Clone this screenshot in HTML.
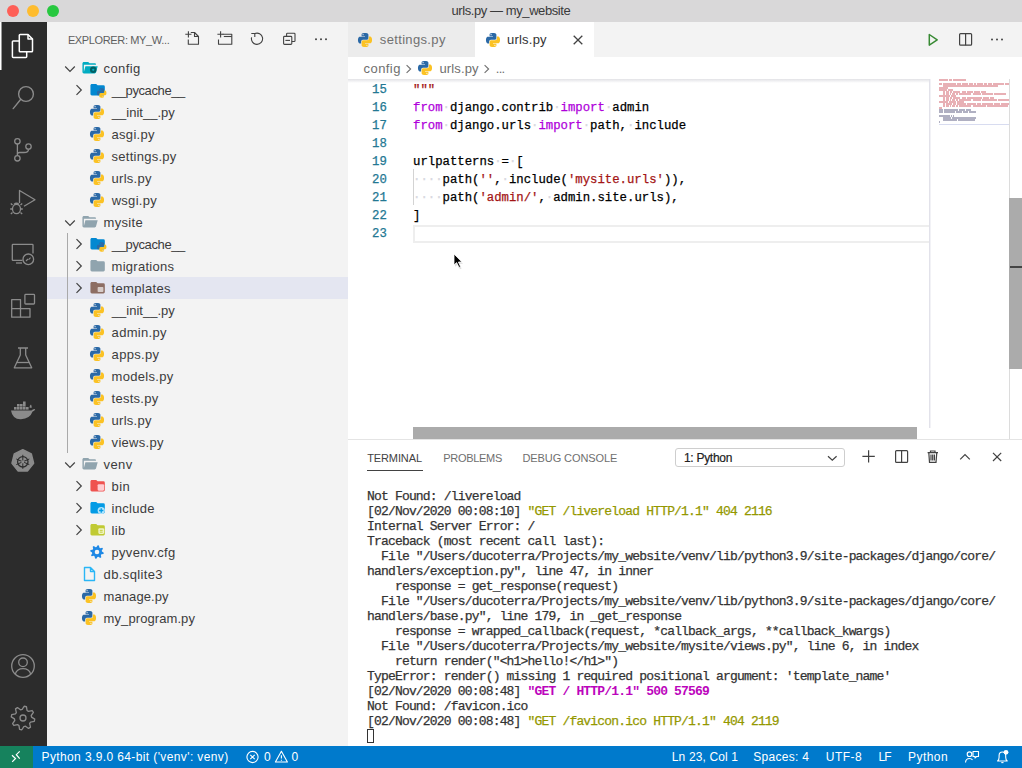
<!DOCTYPE html>
<html><head><meta charset="utf-8"><title>VS Code</title>
<style>
html,body{margin:0;padding:0;width:1022px;height:768px;overflow:hidden;background:#ffffff;}
.r{position:absolute;display:block;}
.t{position:absolute;white-space:pre;}
svg.r{overflow:visible;}
</style></head><body>
<div class="r" style="left:0px;top:0px;width:1022px;height:22px;background:#d9d8d9;"></div>
<div class="r" style="left:0px;top:22px;width:47px;height:724px;background:#2c2c2c;"></div>
<div class="r" style="left:47px;top:22px;width:301px;height:724px;background:#f3f3f3;"></div>
<div class="r" style="left:348px;top:22px;width:674px;height:35px;background:#f3f3f3;"></div>
<div class="r" style="left:348px;top:57px;width:674px;height:689px;background:#ffffff;"></div>
<div class="r" style="left:0px;top:746px;width:1022px;height:22px;background:#007acc;"></div>
<div class="r" style="left:0px;top:746px;width:33px;height:22px;background:#16825d;"></div>
<div class="r" style="left:7px;top:5px;width:12px;height:12px;border-radius:50%;background:#fe5f57;"></div>
<div class="r" style="left:27px;top:5px;width:12px;height:12px;border-radius:50%;background:#febc2e;"></div>
<div class="r" style="left:47px;top:5px;width:12px;height:12px;border-radius:50%;background:#28c840;"></div>
<div class="t" style="left:451.50px;top:2.10px;font-size:13px;line-height:17px;color:#3a3a3a;font-family:'Liberation Sans', sans-serif;letter-spacing:-0.418px;">urls.py — my_website</div>
<div class="r" style="left:0px;top:22px;width:1px;height:48px;background:#ffffff;"></div>
<div class="r" style="left:1px;top:22px;width:1px;height:48px;background:#9a9a9a;"></div>
<svg class="r" style="left:0px;top:22px;" width="47" height="48" viewBox="0 22 47 48"><g fill="none" stroke="#ffffff" stroke-width="1.5" stroke-linejoin="round"><path d="M19.3 41 H13.2 Q12.4 41 12.4 41.8 V56.6 Q12.4 57.4 13.2 57.4 H25.9 Q26.7 57.4 26.7 56.6 V51.7"/><path d="M20.1 34.4 H28 L32.5 39 V50.9 Q32.5 51.7 31.7 51.7 H20.1 Q19.3 51.7 19.3 50.9 V35.2 Q19.3 34.4 20.1 34.4 Z"/><path d="M28 34.4 V39 H32.5"/></g></svg>
<svg class="r" style="left:0px;top:70px;" width="47" height="52" viewBox="0 70 47 52"><g fill="none" stroke="#8b8b8b" stroke-width="1.4" stroke-linecap="round"><circle cx="26" cy="94" r="7.4"/><path d="M20.8 99.3 L13.2 108.6"/></g></svg>
<svg class="r" style="left:0px;top:122px;" width="47" height="52" viewBox="0 122 47 52"><g fill="none" stroke="#8b8b8b" stroke-width="1.3"><circle cx="17.4" cy="141.3" r="2.7"/><circle cx="28.5" cy="146.5" r="2.7"/><circle cx="17.4" cy="158.3" r="2.7"/><path d="M17.4 144 V155.6"/><path d="M28.5 149.2 Q28.5 152.5 24 152.5 H19.5 Q17.4 152.5 17.4 154.5"/></g></svg>
<svg class="r" style="left:0px;top:174px;" width="47" height="52" viewBox="0 174 47 52"><g fill="none" stroke="#8b8b8b" stroke-width="1.3" stroke-linejoin="round"><path d="M19.5 203 V190.5 L35 199.7 L24 206.2"/><ellipse cx="16.5" cy="209" rx="4" ry="4.6"/><path d="M12.5 205 L10.8 203.5 M20.5 205 L22.2 203.5 M12 209 H10.2 M21 209 H22.8 M12.5 212.5 L10.8 214 M20.5 212.5 L22.2 214 M14 204.5 Q16.5 202 19 204.5"/></g></svg>
<svg class="r" style="left:0px;top:226px;" width="47" height="52" viewBox="0 226 47 52"><g fill="none" stroke="#8b8b8b" stroke-width="1.3" stroke-linejoin="round"><path d="M22.5 260.4 H13 Q12.3 260.4 12.3 259.7 V245 Q12.3 244.3 13 244.3 H32.3 Q33 244.3 33 245 V253.5"/><path d="M16 263 H22"/><circle cx="28.3" cy="259.3" r="5.3"/><path d="M26 261 L28 259 M28.6 259.6 L30.6 257.6" stroke-width="1.1"/></g></svg>
<svg class="r" style="left:0px;top:278px;" width="47" height="52" viewBox="0 278 47 52"><g fill="none" stroke="#8b8b8b" stroke-width="1.3" stroke-linejoin="round"><path d="M11.7 299.6 H20.5 V308.6 H30 V317.2 H11.7 Z"/><path d="M11.7 308.6 H20.5 V317.2"/><rect x="24.9" y="294.4" width="9.6" height="9.6" rx="0.8"/></g></svg>
<svg class="r" style="left:0px;top:330px;" width="47" height="52" viewBox="0 330 47 52"><g fill="none" stroke="#8b8b8b" stroke-width="1.3" stroke-linejoin="round"><path d="M18 348 H28 M20.3 348 V355 L14.3 367.8 H31.7 L25.7 355 V348"/><path d="M16.5 362.5 H29.5"/></g></svg>
<svg class="r" style="left:0px;top:382px;" width="47" height="52" viewBox="0 382 47 52"><g fill="#8b8b8b"><path d="M11 410.5 H31.5 Q33 408.5 35.2 409 Q34.6 411.2 32.6 411.5 Q30 418.8 21 419.2 Q12.5 419.5 11 410.5 Z"/><rect x="14" y="407" width="2.6" height="2.6"/><rect x="17" y="407" width="2.6" height="2.6"/><rect x="20" y="407" width="2.6" height="2.6"/><rect x="23" y="407" width="2.6" height="2.6"/><rect x="26" y="407" width="2.6" height="2.6"/><rect x="17" y="404" width="2.6" height="2.6"/><rect x="20" y="404" width="2.6" height="2.6"/><rect x="23" y="404" width="2.6" height="2.6"/><rect x="23" y="401.5" width="2.6" height="2.6"/><path d="M29.5 407.5 Q29.8 405 31 404.5 Q32 406.3 31.5 408 Z"/></g></svg>
<svg class="r" style="left:0px;top:434px;" width="47" height="52" viewBox="0 434 47 52"><g><path fill="#8b8b8b" d="M22.8 449.8 L31.3 453.9 L33.6 463.2 L27.6 470.9 L18 470.9 L12 463.2 L14.3 453.9 Z" stroke="#8b8b8b" stroke-width="1.5" stroke-linejoin="round"/><circle cx="22.8" cy="461.8" r="5.2" fill="none" stroke="#2c2c2c" stroke-width="1.3"/><path d="M22.8 454.8 V468.8 M16.3 459 L29.3 464.6 M29.3 459 L16.3 464.6" stroke="#2c2c2c" stroke-width="1"/><circle cx="22.8" cy="461.8" r="1.6" fill="#8b8b8b"/></g></svg>
<svg class="r" style="left:0px;top:640px;" width="47" height="52" viewBox="0 640 47 52"><g fill="none" stroke="#8b8b8b" stroke-width="1.3"><circle cx="23" cy="666" r="11.3"/><circle cx="23" cy="662.3" r="4.3"/><path d="M15.2 674.2 Q17 668.7 23 668.7 Q29 668.7 30.8 674.2"/></g></svg>
<svg class="r" style="left:0px;top:692px;" width="47" height="52" viewBox="0 692 47 52"><g fill="none" stroke="#8b8b8b" stroke-width="1.3" stroke-linejoin="round"><path d="M24.16 706.26 L26.43 706.71 L27.05 710.42 L28.46 711.35 L32.12 710.51 L33.41 712.44 L31.23 715.50 L31.56 717.16 L34.74 719.16 L34.29 721.43 L30.58 722.05 L29.65 723.46 L30.49 727.12 L28.56 728.41 L25.50 726.23 L23.84 726.56 L21.84 729.74 L19.57 729.29 L18.95 725.58 L17.54 724.65 L13.88 725.49 L12.59 723.56 L14.77 720.50 L14.44 718.84 L11.26 716.84 L11.71 714.57 L15.42 713.95 L16.35 712.54 L15.51 708.88 L17.44 707.59 L20.50 709.77 L22.16 709.44 Z"/><circle cx="23" cy="718" r="3"/></g></svg>
<div class="t" style="left:67.90px;top:33.19px;font-size:11px;line-height:14px;color:#5f5f5f;font-family:'Liberation Sans', sans-serif;letter-spacing:-0.361px;">EXPLORER: MY_W...</div>
<svg class="r" style="left:180px;top:22px;" width="168" height="35" viewBox="180 22 168 35"><g fill="none" stroke="#424242" stroke-width="1.1" stroke-linejoin="round"><path d="M185.3 34.3 H191.5 M188.4 31.2 V37.4"/><path d="M190.8 32.5 H194.5 L198.5 36.5 V44.2 H188.3 V39.6"/><path d="M194.5 32.5 V36.5 H198.5"/><path d="M217.4 34.3 H223.5 M220.6 31.2 V37.4"/><path d="M222.6 34.3 H231.8 V44.2 H218.5 V39.6"/><path d="M223.8 36.5 H231.8"/><path d="M254.8 33.6 A5.6 5.6 0 1 1 251.6 37.3"/><path d="M251.3 33.5 H254.8 V37"/><rect x="283.6" y="36.4" width="8.2" height="8" rx="0.9"/><path d="M286.6 36.4 V34.1 Q286.6 33.3 287.4 33.3 H294.2 Q295 33.3 295 34.1 V40.7 Q295 41.5 294.2 41.5 H291.8"/><path d="M285.4 40.4 H290"/></g><g fill="#424242"><circle cx="316" cy="39.3" r="1"/><circle cx="321" cy="39.3" r="1"/><circle cx="326" cy="39.3" r="1"/></g></svg>
<div class="r" style="left:47px;top:277px;width:301px;height:22px;background:#e4e6f1;"></div>
<div class="r" style="left:67px;top:233px;width:1px;height:220px;background:#a9a9a9;"></div>
<svg class="r" style="left:62.2px;top:60.5px;" width="16" height="16" viewBox="0 0 16 16"><path d="M3.2 5.5 L8 10.3 L12.8 5.5" fill="none" stroke="#424242" stroke-width="1.2"/></svg>
<svg class="r" style="left:80.56px;top:59.36px;" width="17.28" height="17.28" viewBox="0 0 24 24"><path fill="#00acc1" d="M19 20H4a2 2 0 0 1-2-2V6c0-1.11.89-2 2-2h6l2 2h7a2 2 0 0 1 2 2H4v10l2.14-8h17.07l-2.28 8.5c-.23.87-1.01 1.5-1.93 1.5z"/><circle cx="17" cy="15" r="4.5" fill="#006064"/><circle cx="17" cy="15" r="1.6" fill="#00acc1"/></svg>
<div class="t" style="left:103.60px;top:59.70px;font-size:13px;line-height:17px;color:#3c3c3c;font-family:'Liberation Sans', sans-serif;letter-spacing:0.398px;">config</div>
<svg class="r" style="left:70.5px;top:82px;" width="16" height="16" viewBox="0 0 16 16"><path d="M5.5 3.2 L10.3 8 L5.5 12.8" fill="none" stroke="#424242" stroke-width="1.2"/></svg>
<svg class="r" style="left:88.56px;top:81.36px;" width="17.28" height="17.28" viewBox="0 0 24 24"><path fill="#0288d1" d="M10 4H4c-1.11 0-2 .89-2 2v12a2 2 0 0 0 2 2h16a2 2 0 0 0 2-2V8a2 2 0 0 0-2-2h-8l-2-2z"/><g transform="translate(11 10) scale(0.55)"><path fill="#2b69a6" d="M14.25.18l.9.2.73.26.59.3.45.32.34.34.25.34.16.33.1.3.04.26.02.2-.01.13V8.5l-.05.63-.13.55-.21.46-.26.38-.3.31-.33.25-.35.19-.35.14-.33.1-.3.07-.26.04-.21.02H8.77l-.69.05-.59.14-.5.22-.41.27-.33.32-.27.35-.2.36-.15.37-.1.35-.07.32-.04.27-.02.21v3.06H3.17l-.21-.03-.28-.07-.32-.12-.35-.18-.36-.26-.36-.36-.35-.46-.32-.59-.28-.73-.21-.88-.14-1.05-.05-1.23.06-1.22.16-1.04.24-.87.32-.71.36-.57.4-.44.42-.33.42-.24.4-.16.36-.1.32-.05.24-.01h.16l.06.01h8.16v-.83H6.18l-.01-2.75-.02-.37.05-.34.11-.31.17-.28.25-.26.31-.23.38-.2.44-.18.51-.15.58-.12.64-.1.71-.06.77-.04.84-.02 1.27.05zm-6.3 1.98l-.23.33-.08.41.08.41.23.34.33.22.41.09.41-.09.33-.22.23-.34.08-.41-.08-.41-.23-.33-.33-.22-.41-.09-.41.09z"/><path fill="#fbc224" d="M21.04 6.11l.28.06.32.12.35.18.36.27.36.35.35.47.32.59.28.73.21.88.14 1.04.05 1.23-.06 1.23-.16 1.04-.24.86-.32.71-.36.57-.4.45-.42.33-.42.24-.4.16-.36.09-.32.05-.24.02-.16-.01h-8.22v.82h5.84l.01 2.76.02.36-.05.34-.11.31-.17.29-.25.25-.31.24-.38.2-.44.17-.51.15-.58.13-.64.09-.71.07-.77.04-.84.01-1.27-.04-1.07-.14-.9-.2-.73-.25-.59-.3-.45-.33-.34-.34-.25-.34-.16-.33-.1-.3-.04-.25-.02-.2.01-.13v-5.34l.05-.64.13-.54.21-.46.26-.38.3-.32.33-.24.35-.2.35-.14.33-.1.3-.06.26-.04.21-.02.13-.01h5.84l.69-.05.59-.14.5-.21.41-.28.33-.32.27-.35.2-.36.15-.36.1-.35.07-.32.04-.28.02-.21V6.07h2.09l.14.01zm-6.47 14.25l-.23.33-.08.41.08.41.23.33.33.23.41.08.41-.08.33-.23.23-.33.08-.41-.08-.41-.23-.33-.33-.23-.41-.08-.41.08z"/></g></svg>
<div class="t" style="left:111.86px;top:81.70px;font-size:13px;line-height:17px;color:#3c3c3c;font-family:'Liberation Sans', sans-serif;letter-spacing:-0.391px;">__pycache__</div>
<svg class="r" style="left:90px;top:105.4px;" width="14" height="14" viewBox="0 0 24 24"><path fill="#2b69a6" d="M14.25.18l.9.2.73.26.59.3.45.32.34.34.25.34.16.33.1.3.04.26.02.2-.01.13V8.5l-.05.63-.13.55-.21.46-.26.38-.3.31-.33.25-.35.19-.35.14-.33.1-.3.07-.26.04-.21.02H8.77l-.69.05-.59.14-.5.22-.41.27-.33.32-.27.35-.2.36-.15.37-.1.35-.07.32-.04.27-.02.21v3.06H3.17l-.21-.03-.28-.07-.32-.12-.35-.18-.36-.26-.36-.36-.35-.46-.32-.59-.28-.73-.21-.88-.14-1.05-.05-1.23.06-1.22.16-1.04.24-.87.32-.71.36-.57.4-.44.42-.33.42-.24.4-.16.36-.1.32-.05.24-.01h.16l.06.01h8.16v-.83H6.18l-.01-2.75-.02-.37.05-.34.11-.31.17-.28.25-.26.31-.23.38-.2.44-.18.51-.15.58-.12.64-.1.71-.06.77-.04.84-.02 1.27.05zm-6.3 1.98l-.23.33-.08.41.08.41.23.34.33.22.41.09.41-.09.33-.22.23-.34.08-.41-.08-.41-.23-.33-.33-.22-.41-.09-.41.09z"/><path fill="#fbc224" d="M21.04 6.11l.28.06.32.12.35.18.36.27.36.35.35.47.32.59.28.73.21.88.14 1.04.05 1.23-.06 1.23-.16 1.04-.24.86-.32.71-.36.57-.4.45-.42.33-.42.24-.4.16-.36.09-.32.05-.24.02-.16-.01h-8.22v.82h5.84l.01 2.76.02.36-.05.34-.11.31-.17.29-.25.25-.31.24-.38.2-.44.17-.51.15-.58.13-.64.09-.71.07-.77.04-.84.01-1.27-.04-1.07-.14-.9-.2-.73-.25-.59-.3-.45-.33-.34-.34-.25-.34-.16-.33-.1-.3-.04-.25-.02-.2.01-.13v-5.34l.05-.64.13-.54.21-.46.26-.38.3-.32.33-.24.35-.2.35-.14.33-.1.3-.06.26-.04.21-.02.13-.01h5.84l.69-.05.59-.14.5-.21.41-.28.33-.32.27-.35.2-.36.15-.36.1-.35.07-.32.04-.28.02-.21V6.07h2.09l.14.01zm-6.47 14.25l-.23.33-.08.41.08.41.23.33.33.23.41.08.41-.08.33-.23.23-.33.08-.41-.08-.41-.23-.33-.33-.23-.41-.08-.41.08z"/></svg>
<div class="t" style="left:111.86px;top:103.70px;font-size:13px;line-height:17px;color:#3c3c3c;font-family:'Liberation Sans', sans-serif;">__init__.py</div>
<svg class="r" style="left:90px;top:127.4px;" width="14" height="14" viewBox="0 0 24 24"><path fill="#2b69a6" d="M14.25.18l.9.2.73.26.59.3.45.32.34.34.25.34.16.33.1.3.04.26.02.2-.01.13V8.5l-.05.63-.13.55-.21.46-.26.38-.3.31-.33.25-.35.19-.35.14-.33.1-.3.07-.26.04-.21.02H8.77l-.69.05-.59.14-.5.22-.41.27-.33.32-.27.35-.2.36-.15.37-.1.35-.07.32-.04.27-.02.21v3.06H3.17l-.21-.03-.28-.07-.32-.12-.35-.18-.36-.26-.36-.36-.35-.46-.32-.59-.28-.73-.21-.88-.14-1.05-.05-1.23.06-1.22.16-1.04.24-.87.32-.71.36-.57.4-.44.42-.33.42-.24.4-.16.36-.1.32-.05.24-.01h.16l.06.01h8.16v-.83H6.18l-.01-2.75-.02-.37.05-.34.11-.31.17-.28.25-.26.31-.23.38-.2.44-.18.51-.15.58-.12.64-.1.71-.06.77-.04.84-.02 1.27.05zm-6.3 1.98l-.23.33-.08.41.08.41.23.34.33.22.41.09.41-.09.33-.22.23-.34.08-.41-.08-.41-.23-.33-.33-.22-.41-.09-.41.09z"/><path fill="#fbc224" d="M21.04 6.11l.28.06.32.12.35.18.36.27.36.35.35.47.32.59.28.73.21.88.14 1.04.05 1.23-.06 1.23-.16 1.04-.24.86-.32.71-.36.57-.4.45-.42.33-.42.24-.4.16-.36.09-.32.05-.24.02-.16-.01h-8.22v.82h5.84l.01 2.76.02.36-.05.34-.11.31-.17.29-.25.25-.31.24-.38.2-.44.17-.51.15-.58.13-.64.09-.71.07-.77.04-.84.01-1.27-.04-1.07-.14-.9-.2-.73-.25-.59-.3-.45-.33-.34-.34-.25-.34-.16-.33-.1-.3-.04-.25-.02-.2.01-.13v-5.34l.05-.64.13-.54.21-.46.26-.38.3-.32.33-.24.35-.2.35-.14.33-.1.3-.06.26-.04.21-.02.13-.01h5.84l.69-.05.59-.14.5-.21.41-.28.33-.32.27-.35.2-.36.15-.36.1-.35.07-.32.04-.28.02-.21V6.07h2.09l.14.01zm-6.47 14.25l-.23.33-.08.41.08.41.23.33.33.23.41.08.41-.08.33-.23.23-.33.08-.41-.08-.41-.23-.33-.33-.23-.41-.08-.41.08z"/></svg>
<div class="t" style="left:111.60px;top:125.70px;font-size:13px;line-height:17px;color:#3c3c3c;font-family:'Liberation Sans', sans-serif;letter-spacing:0.275px;">asgi.py</div>
<svg class="r" style="left:90px;top:149.4px;" width="14" height="14" viewBox="0 0 24 24"><path fill="#2b69a6" d="M14.25.18l.9.2.73.26.59.3.45.32.34.34.25.34.16.33.1.3.04.26.02.2-.01.13V8.5l-.05.63-.13.55-.21.46-.26.38-.3.31-.33.25-.35.19-.35.14-.33.1-.3.07-.26.04-.21.02H8.77l-.69.05-.59.14-.5.22-.41.27-.33.32-.27.35-.2.36-.15.37-.1.35-.07.32-.04.27-.02.21v3.06H3.17l-.21-.03-.28-.07-.32-.12-.35-.18-.36-.26-.36-.36-.35-.46-.32-.59-.28-.73-.21-.88-.14-1.05-.05-1.23.06-1.22.16-1.04.24-.87.32-.71.36-.57.4-.44.42-.33.42-.24.4-.16.36-.1.32-.05.24-.01h.16l.06.01h8.16v-.83H6.18l-.01-2.75-.02-.37.05-.34.11-.31.17-.28.25-.26.31-.23.38-.2.44-.18.51-.15.58-.12.64-.1.71-.06.77-.04.84-.02 1.27.05zm-6.3 1.98l-.23.33-.08.41.08.41.23.34.33.22.41.09.41-.09.33-.22.23-.34.08-.41-.08-.41-.23-.33-.33-.22-.41-.09-.41.09z"/><path fill="#fbc224" d="M21.04 6.11l.28.06.32.12.35.18.36.27.36.35.35.47.32.59.28.73.21.88.14 1.04.05 1.23-.06 1.23-.16 1.04-.24.86-.32.71-.36.57-.4.45-.42.33-.42.24-.4.16-.36.09-.32.05-.24.02-.16-.01h-8.22v.82h5.84l.01 2.76.02.36-.05.34-.11.31-.17.29-.25.25-.31.24-.38.2-.44.17-.51.15-.58.13-.64.09-.71.07-.77.04-.84.01-1.27-.04-1.07-.14-.9-.2-.73-.25-.59-.3-.45-.33-.34-.34-.25-.34-.16-.33-.1-.3-.04-.25-.02-.2.01-.13v-5.34l.05-.64.13-.54.21-.46.26-.38.3-.32.33-.24.35-.2.35-.14.33-.1.3-.06.26-.04.21-.02.13-.01h5.84l.69-.05.59-.14.5-.21.41-.28.33-.32.27-.35.2-.36.15-.36.1-.35.07-.32.04-.28.02-.21V6.07h2.09l.14.01zm-6.47 14.25l-.23.33-.08.41.08.41.23.33.33.23.41.08.41-.08.33-.23.23-.33.08-.41-.08-.41-.23-.33-.33-.23-.41-.08-.41.08z"/></svg>
<div class="t" style="left:111.60px;top:147.70px;font-size:13px;line-height:17px;color:#3c3c3c;font-family:'Liberation Sans', sans-serif;letter-spacing:0.249px;">settings.py</div>
<svg class="r" style="left:90px;top:171.4px;" width="14" height="14" viewBox="0 0 24 24"><path fill="#2b69a6" d="M14.25.18l.9.2.73.26.59.3.45.32.34.34.25.34.16.33.1.3.04.26.02.2-.01.13V8.5l-.05.63-.13.55-.21.46-.26.38-.3.31-.33.25-.35.19-.35.14-.33.1-.3.07-.26.04-.21.02H8.77l-.69.05-.59.14-.5.22-.41.27-.33.32-.27.35-.2.36-.15.37-.1.35-.07.32-.04.27-.02.21v3.06H3.17l-.21-.03-.28-.07-.32-.12-.35-.18-.36-.26-.36-.36-.35-.46-.32-.59-.28-.73-.21-.88-.14-1.05-.05-1.23.06-1.22.16-1.04.24-.87.32-.71.36-.57.4-.44.42-.33.42-.24.4-.16.36-.1.32-.05.24-.01h.16l.06.01h8.16v-.83H6.18l-.01-2.75-.02-.37.05-.34.11-.31.17-.28.25-.26.31-.23.38-.2.44-.18.51-.15.58-.12.64-.1.71-.06.77-.04.84-.02 1.27.05zm-6.3 1.98l-.23.33-.08.41.08.41.23.34.33.22.41.09.41-.09.33-.22.23-.34.08-.41-.08-.41-.23-.33-.33-.22-.41-.09-.41.09z"/><path fill="#fbc224" d="M21.04 6.11l.28.06.32.12.35.18.36.27.36.35.35.47.32.59.28.73.21.88.14 1.04.05 1.23-.06 1.23-.16 1.04-.24.86-.32.71-.36.57-.4.45-.42.33-.42.24-.4.16-.36.09-.32.05-.24.02-.16-.01h-8.22v.82h5.84l.01 2.76.02.36-.05.34-.11.31-.17.29-.25.25-.31.24-.38.2-.44.17-.51.15-.58.13-.64.09-.71.07-.77.04-.84.01-1.27-.04-1.07-.14-.9-.2-.73-.25-.59-.3-.45-.33-.34-.34-.25-.34-.16-.33-.1-.3-.04-.25-.02-.2.01-.13v-5.34l.05-.64.13-.54.21-.46.26-.38.3-.32.33-.24.35-.2.35-.14.33-.1.3-.06.26-.04.21-.02.13-.01h5.84l.69-.05.59-.14.5-.21.41-.28.33-.32.27-.35.2-.36.15-.36.1-.35.07-.32.04-.28.02-.21V6.07h2.09l.14.01zm-6.47 14.25l-.23.33-.08.41.08.41.23.33.33.23.41.08.41-.08.33-.23.23-.33.08-.41-.08-.41-.23-.33-.33-.23-.41-.08-.41.08z"/></svg>
<div class="t" style="left:111.60px;top:169.70px;font-size:13px;line-height:17px;color:#3c3c3c;font-family:'Liberation Sans', sans-serif;letter-spacing:0.255px;">urls.py</div>
<svg class="r" style="left:90px;top:193.4px;" width="14" height="14" viewBox="0 0 24 24"><path fill="#2b69a6" d="M14.25.18l.9.2.73.26.59.3.45.32.34.34.25.34.16.33.1.3.04.26.02.2-.01.13V8.5l-.05.63-.13.55-.21.46-.26.38-.3.31-.33.25-.35.19-.35.14-.33.1-.3.07-.26.04-.21.02H8.77l-.69.05-.59.14-.5.22-.41.27-.33.32-.27.35-.2.36-.15.37-.1.35-.07.32-.04.27-.02.21v3.06H3.17l-.21-.03-.28-.07-.32-.12-.35-.18-.36-.26-.36-.36-.35-.46-.32-.59-.28-.73-.21-.88-.14-1.05-.05-1.23.06-1.22.16-1.04.24-.87.32-.71.36-.57.4-.44.42-.33.42-.24.4-.16.36-.1.32-.05.24-.01h.16l.06.01h8.16v-.83H6.18l-.01-2.75-.02-.37.05-.34.11-.31.17-.28.25-.26.31-.23.38-.2.44-.18.51-.15.58-.12.64-.1.71-.06.77-.04.84-.02 1.27.05zm-6.3 1.98l-.23.33-.08.41.08.41.23.34.33.22.41.09.41-.09.33-.22.23-.34.08-.41-.08-.41-.23-.33-.33-.22-.41-.09-.41.09z"/><path fill="#fbc224" d="M21.04 6.11l.28.06.32.12.35.18.36.27.36.35.35.47.32.59.28.73.21.88.14 1.04.05 1.23-.06 1.23-.16 1.04-.24.86-.32.71-.36.57-.4.45-.42.33-.42.24-.4.16-.36.09-.32.05-.24.02-.16-.01h-8.22v.82h5.84l.01 2.76.02.36-.05.34-.11.31-.17.29-.25.25-.31.24-.38.2-.44.17-.51.15-.58.13-.64.09-.71.07-.77.04-.84.01-1.27-.04-1.07-.14-.9-.2-.73-.25-.59-.3-.45-.33-.34-.34-.25-.34-.16-.33-.1-.3-.04-.25-.02-.2.01-.13v-5.34l.05-.64.13-.54.21-.46.26-.38.3-.32.33-.24.35-.2.35-.14.33-.1.3-.06.26-.04.21-.02.13-.01h5.84l.69-.05.59-.14.5-.21.41-.28.33-.32.27-.35.2-.36.15-.36.1-.35.07-.32.04-.28.02-.21V6.07h2.09l.14.01zm-6.47 14.25l-.23.33-.08.41.08.41.23.33.33.23.41.08.41-.08.33-.23.23-.33.08-.41-.08-.41-.23-.33-.33-.23-.41-.08-.41.08z"/></svg>
<div class="t" style="left:111.66px;top:191.70px;font-size:13px;line-height:17px;color:#3c3c3c;font-family:'Liberation Sans', sans-serif;letter-spacing:0.289px;">wsgi.py</div>
<svg class="r" style="left:62.2px;top:214.5px;" width="16" height="16" viewBox="0 0 16 16"><path d="M3.2 5.5 L8 10.3 L12.8 5.5" fill="none" stroke="#424242" stroke-width="1.2"/></svg>
<svg class="r" style="left:80.56px;top:213.36px;" width="17.28" height="17.28" viewBox="0 0 24 24"><path fill="#90a4ae" d="M19 20H4a2 2 0 0 1-2-2V6c0-1.11.89-2 2-2h6l2 2h7a2 2 0 0 1 2 2H4v10l2.14-8h17.07l-2.28 8.5c-.23.87-1.01 1.5-1.93 1.5z"/></svg>
<div class="t" style="left:103.60px;top:213.70px;font-size:13px;line-height:17px;color:#3c3c3c;font-family:'Liberation Sans', sans-serif;letter-spacing:0.301px;">mysite</div>
<svg class="r" style="left:70.5px;top:236px;" width="16" height="16" viewBox="0 0 16 16"><path d="M5.5 3.2 L10.3 8 L5.5 12.8" fill="none" stroke="#424242" stroke-width="1.2"/></svg>
<svg class="r" style="left:88.56px;top:235.36px;" width="17.28" height="17.28" viewBox="0 0 24 24"><path fill="#0288d1" d="M10 4H4c-1.11 0-2 .89-2 2v12a2 2 0 0 0 2 2h16a2 2 0 0 0 2-2V8a2 2 0 0 0-2-2h-8l-2-2z"/><g transform="translate(11 10) scale(0.55)"><path fill="#2b69a6" d="M14.25.18l.9.2.73.26.59.3.45.32.34.34.25.34.16.33.1.3.04.26.02.2-.01.13V8.5l-.05.63-.13.55-.21.46-.26.38-.3.31-.33.25-.35.19-.35.14-.33.1-.3.07-.26.04-.21.02H8.77l-.69.05-.59.14-.5.22-.41.27-.33.32-.27.35-.2.36-.15.37-.1.35-.07.32-.04.27-.02.21v3.06H3.17l-.21-.03-.28-.07-.32-.12-.35-.18-.36-.26-.36-.36-.35-.46-.32-.59-.28-.73-.21-.88-.14-1.05-.05-1.23.06-1.22.16-1.04.24-.87.32-.71.36-.57.4-.44.42-.33.42-.24.4-.16.36-.1.32-.05.24-.01h.16l.06.01h8.16v-.83H6.18l-.01-2.75-.02-.37.05-.34.11-.31.17-.28.25-.26.31-.23.38-.2.44-.18.51-.15.58-.12.64-.1.71-.06.77-.04.84-.02 1.27.05zm-6.3 1.98l-.23.33-.08.41.08.41.23.34.33.22.41.09.41-.09.33-.22.23-.34.08-.41-.08-.41-.23-.33-.33-.22-.41-.09-.41.09z"/><path fill="#fbc224" d="M21.04 6.11l.28.06.32.12.35.18.36.27.36.35.35.47.32.59.28.73.21.88.14 1.04.05 1.23-.06 1.23-.16 1.04-.24.86-.32.71-.36.57-.4.45-.42.33-.42.24-.4.16-.36.09-.32.05-.24.02-.16-.01h-8.22v.82h5.84l.01 2.76.02.36-.05.34-.11.31-.17.29-.25.25-.31.24-.38.2-.44.17-.51.15-.58.13-.64.09-.71.07-.77.04-.84.01-1.27-.04-1.07-.14-.9-.2-.73-.25-.59-.3-.45-.33-.34-.34-.25-.34-.16-.33-.1-.3-.04-.25-.02-.2.01-.13v-5.34l.05-.64.13-.54.21-.46.26-.38.3-.32.33-.24.35-.2.35-.14.33-.1.3-.06.26-.04.21-.02.13-.01h5.84l.69-.05.59-.14.5-.21.41-.28.33-.32.27-.35.2-.36.15-.36.1-.35.07-.32.04-.28.02-.21V6.07h2.09l.14.01zm-6.47 14.25l-.23.33-.08.41.08.41.23.33.33.23.41.08.41-.08.33-.23.23-.33.08-.41-.08-.41-.23-.33-.33-.23-.41-.08-.41.08z"/></g></svg>
<div class="t" style="left:111.86px;top:235.70px;font-size:13px;line-height:17px;color:#3c3c3c;font-family:'Liberation Sans', sans-serif;letter-spacing:-0.391px;">__pycache__</div>
<svg class="r" style="left:70.5px;top:258px;" width="16" height="16" viewBox="0 0 16 16"><path d="M5.5 3.2 L10.3 8 L5.5 12.8" fill="none" stroke="#424242" stroke-width="1.2"/></svg>
<svg class="r" style="left:88.56px;top:257.36px;" width="17.28" height="17.28" viewBox="0 0 24 24"><path fill="#90a4ae" d="M10 4H4c-1.11 0-2 .89-2 2v12a2 2 0 0 0 2 2h16a2 2 0 0 0 2-2V8a2 2 0 0 0-2-2h-8l-2-2z"/></svg>
<div class="t" style="left:111.60px;top:257.70px;font-size:13px;line-height:17px;color:#3c3c3c;font-family:'Liberation Sans', sans-serif;letter-spacing:0.267px;">migrations</div>
<svg class="r" style="left:70.5px;top:280px;" width="16" height="16" viewBox="0 0 16 16"><path d="M5.5 3.2 L10.3 8 L5.5 12.8" fill="none" stroke="#424242" stroke-width="1.2"/></svg>
<svg class="r" style="left:88.56px;top:279.36px;" width="17.28" height="17.28" viewBox="0 0 24 24"><path fill="#8d6e63" d="M10 4H4c-1.11 0-2 .89-2 2v12a2 2 0 0 0 2 2h16a2 2 0 0 0 2-2V8a2 2 0 0 0-2-2h-8l-2-2z"/><rect x="12" y="11" width="8" height="7" rx="1" fill="#d7ccc8"/></svg>
<div class="t" style="left:111.60px;top:279.70px;font-size:13px;line-height:17px;color:#3c3c3c;font-family:'Liberation Sans', sans-serif;letter-spacing:0.318px;">templates</div>
<svg class="r" style="left:90px;top:303.4px;" width="14" height="14" viewBox="0 0 24 24"><path fill="#2b69a6" d="M14.25.18l.9.2.73.26.59.3.45.32.34.34.25.34.16.33.1.3.04.26.02.2-.01.13V8.5l-.05.63-.13.55-.21.46-.26.38-.3.31-.33.25-.35.19-.35.14-.33.1-.3.07-.26.04-.21.02H8.77l-.69.05-.59.14-.5.22-.41.27-.33.32-.27.35-.2.36-.15.37-.1.35-.07.32-.04.27-.02.21v3.06H3.17l-.21-.03-.28-.07-.32-.12-.35-.18-.36-.26-.36-.36-.35-.46-.32-.59-.28-.73-.21-.88-.14-1.05-.05-1.23.06-1.22.16-1.04.24-.87.32-.71.36-.57.4-.44.42-.33.42-.24.4-.16.36-.1.32-.05.24-.01h.16l.06.01h8.16v-.83H6.18l-.01-2.75-.02-.37.05-.34.11-.31.17-.28.25-.26.31-.23.38-.2.44-.18.51-.15.58-.12.64-.1.71-.06.77-.04.84-.02 1.27.05zm-6.3 1.98l-.23.33-.08.41.08.41.23.34.33.22.41.09.41-.09.33-.22.23-.34.08-.41-.08-.41-.23-.33-.33-.22-.41-.09-.41.09z"/><path fill="#fbc224" d="M21.04 6.11l.28.06.32.12.35.18.36.27.36.35.35.47.32.59.28.73.21.88.14 1.04.05 1.23-.06 1.23-.16 1.04-.24.86-.32.71-.36.57-.4.45-.42.33-.42.24-.4.16-.36.09-.32.05-.24.02-.16-.01h-8.22v.82h5.84l.01 2.76.02.36-.05.34-.11.31-.17.29-.25.25-.31.24-.38.2-.44.17-.51.15-.58.13-.64.09-.71.07-.77.04-.84.01-1.27-.04-1.07-.14-.9-.2-.73-.25-.59-.3-.45-.33-.34-.34-.25-.34-.16-.33-.1-.3-.04-.25-.02-.2.01-.13v-5.34l.05-.64.13-.54.21-.46.26-.38.3-.32.33-.24.35-.2.35-.14.33-.1.3-.06.26-.04.21-.02.13-.01h5.84l.69-.05.59-.14.5-.21.41-.28.33-.32.27-.35.2-.36.15-.36.1-.35.07-.32.04-.28.02-.21V6.07h2.09l.14.01zm-6.47 14.25l-.23.33-.08.41.08.41.23.33.33.23.41.08.41-.08.33-.23.23-.33.08-.41-.08-.41-.23-.33-.33-.23-.41-.08-.41.08z"/></svg>
<div class="t" style="left:111.86px;top:301.70px;font-size:13px;line-height:17px;color:#3c3c3c;font-family:'Liberation Sans', sans-serif;">__init__.py</div>
<svg class="r" style="left:90px;top:325.4px;" width="14" height="14" viewBox="0 0 24 24"><path fill="#2b69a6" d="M14.25.18l.9.2.73.26.59.3.45.32.34.34.25.34.16.33.1.3.04.26.02.2-.01.13V8.5l-.05.63-.13.55-.21.46-.26.38-.3.31-.33.25-.35.19-.35.14-.33.1-.3.07-.26.04-.21.02H8.77l-.69.05-.59.14-.5.22-.41.27-.33.32-.27.35-.2.36-.15.37-.1.35-.07.32-.04.27-.02.21v3.06H3.17l-.21-.03-.28-.07-.32-.12-.35-.18-.36-.26-.36-.36-.35-.46-.32-.59-.28-.73-.21-.88-.14-1.05-.05-1.23.06-1.22.16-1.04.24-.87.32-.71.36-.57.4-.44.42-.33.42-.24.4-.16.36-.1.32-.05.24-.01h.16l.06.01h8.16v-.83H6.18l-.01-2.75-.02-.37.05-.34.11-.31.17-.28.25-.26.31-.23.38-.2.44-.18.51-.15.58-.12.64-.1.71-.06.77-.04.84-.02 1.27.05zm-6.3 1.98l-.23.33-.08.41.08.41.23.34.33.22.41.09.41-.09.33-.22.23-.34.08-.41-.08-.41-.23-.33-.33-.22-.41-.09-.41.09z"/><path fill="#fbc224" d="M21.04 6.11l.28.06.32.12.35.18.36.27.36.35.35.47.32.59.28.73.21.88.14 1.04.05 1.23-.06 1.23-.16 1.04-.24.86-.32.71-.36.57-.4.45-.42.33-.42.24-.4.16-.36.09-.32.05-.24.02-.16-.01h-8.22v.82h5.84l.01 2.76.02.36-.05.34-.11.31-.17.29-.25.25-.31.24-.38.2-.44.17-.51.15-.58.13-.64.09-.71.07-.77.04-.84.01-1.27-.04-1.07-.14-.9-.2-.73-.25-.59-.3-.45-.33-.34-.34-.25-.34-.16-.33-.1-.3-.04-.25-.02-.2.01-.13v-5.34l.05-.64.13-.54.21-.46.26-.38.3-.32.33-.24.35-.2.35-.14.33-.1.3-.06.26-.04.21-.02.13-.01h5.84l.69-.05.59-.14.5-.21.41-.28.33-.32.27-.35.2-.36.15-.36.1-.35.07-.32.04-.28.02-.21V6.07h2.09l.14.01zm-6.47 14.25l-.23.33-.08.41.08.41.23.33.33.23.41.08.41-.08.33-.23.23-.33.08-.41-.08-.41-.23-.33-.33-.23-.41-.08-.41.08z"/></svg>
<div class="t" style="left:111.60px;top:323.70px;font-size:13px;line-height:17px;color:#3c3c3c;font-family:'Liberation Sans', sans-serif;letter-spacing:0.302px;">admin.py</div>
<svg class="r" style="left:90px;top:347.4px;" width="14" height="14" viewBox="0 0 24 24"><path fill="#2b69a6" d="M14.25.18l.9.2.73.26.59.3.45.32.34.34.25.34.16.33.1.3.04.26.02.2-.01.13V8.5l-.05.63-.13.55-.21.46-.26.38-.3.31-.33.25-.35.19-.35.14-.33.1-.3.07-.26.04-.21.02H8.77l-.69.05-.59.14-.5.22-.41.27-.33.32-.27.35-.2.36-.15.37-.1.35-.07.32-.04.27-.02.21v3.06H3.17l-.21-.03-.28-.07-.32-.12-.35-.18-.36-.26-.36-.36-.35-.46-.32-.59-.28-.73-.21-.88-.14-1.05-.05-1.23.06-1.22.16-1.04.24-.87.32-.71.36-.57.4-.44.42-.33.42-.24.4-.16.36-.1.32-.05.24-.01h.16l.06.01h8.16v-.83H6.18l-.01-2.75-.02-.37.05-.34.11-.31.17-.28.25-.26.31-.23.38-.2.44-.18.51-.15.58-.12.64-.1.71-.06.77-.04.84-.02 1.27.05zm-6.3 1.98l-.23.33-.08.41.08.41.23.34.33.22.41.09.41-.09.33-.22.23-.34.08-.41-.08-.41-.23-.33-.33-.22-.41-.09-.41.09z"/><path fill="#fbc224" d="M21.04 6.11l.28.06.32.12.35.18.36.27.36.35.35.47.32.59.28.73.21.88.14 1.04.05 1.23-.06 1.23-.16 1.04-.24.86-.32.71-.36.57-.4.45-.42.33-.42.24-.4.16-.36.09-.32.05-.24.02-.16-.01h-8.22v.82h5.84l.01 2.76.02.36-.05.34-.11.31-.17.29-.25.25-.31.24-.38.2-.44.17-.51.15-.58.13-.64.09-.71.07-.77.04-.84.01-1.27-.04-1.07-.14-.9-.2-.73-.25-.59-.3-.45-.33-.34-.34-.25-.34-.16-.33-.1-.3-.04-.25-.02-.2.01-.13v-5.34l.05-.64.13-.54.21-.46.26-.38.3-.32.33-.24.35-.2.35-.14.33-.1.3-.06.26-.04.21-.02.13-.01h5.84l.69-.05.59-.14.5-.21.41-.28.33-.32.27-.35.2-.36.15-.36.1-.35.07-.32.04-.28.02-.21V6.07h2.09l.14.01zm-6.47 14.25l-.23.33-.08.41.08.41.23.33.33.23.41.08.41-.08.33-.23.23-.33.08-.41-.08-.41-.23-.33-.33-.23-.41-.08-.41.08z"/></svg>
<div class="t" style="left:111.60px;top:345.70px;font-size:13px;line-height:17px;color:#3c3c3c;font-family:'Liberation Sans', sans-serif;letter-spacing:0.304px;">apps.py</div>
<svg class="r" style="left:90px;top:369.4px;" width="14" height="14" viewBox="0 0 24 24"><path fill="#2b69a6" d="M14.25.18l.9.2.73.26.59.3.45.32.34.34.25.34.16.33.1.3.04.26.02.2-.01.13V8.5l-.05.63-.13.55-.21.46-.26.38-.3.31-.33.25-.35.19-.35.14-.33.1-.3.07-.26.04-.21.02H8.77l-.69.05-.59.14-.5.22-.41.27-.33.32-.27.35-.2.36-.15.37-.1.35-.07.32-.04.27-.02.21v3.06H3.17l-.21-.03-.28-.07-.32-.12-.35-.18-.36-.26-.36-.36-.35-.46-.32-.59-.28-.73-.21-.88-.14-1.05-.05-1.23.06-1.22.16-1.04.24-.87.32-.71.36-.57.4-.44.42-.33.42-.24.4-.16.36-.1.32-.05.24-.01h.16l.06.01h8.16v-.83H6.18l-.01-2.75-.02-.37.05-.34.11-.31.17-.28.25-.26.31-.23.38-.2.44-.18.51-.15.58-.12.64-.1.71-.06.77-.04.84-.02 1.27.05zm-6.3 1.98l-.23.33-.08.41.08.41.23.34.33.22.41.09.41-.09.33-.22.23-.34.08-.41-.08-.41-.23-.33-.33-.22-.41-.09-.41.09z"/><path fill="#fbc224" d="M21.04 6.11l.28.06.32.12.35.18.36.27.36.35.35.47.32.59.28.73.21.88.14 1.04.05 1.23-.06 1.23-.16 1.04-.24.86-.32.71-.36.57-.4.45-.42.33-.42.24-.4.16-.36.09-.32.05-.24.02-.16-.01h-8.22v.82h5.84l.01 2.76.02.36-.05.34-.11.31-.17.29-.25.25-.31.24-.38.2-.44.17-.51.15-.58.13-.64.09-.71.07-.77.04-.84.01-1.27-.04-1.07-.14-.9-.2-.73-.25-.59-.3-.45-.33-.34-.34-.25-.34-.16-.33-.1-.3-.04-.25-.02-.2.01-.13v-5.34l.05-.64.13-.54.21-.46.26-.38.3-.32.33-.24.35-.2.35-.14.33-.1.3-.06.26-.04.21-.02.13-.01h5.84l.69-.05.59-.14.5-.21.41-.28.33-.32.27-.35.2-.36.15-.36.1-.35.07-.32.04-.28.02-.21V6.07h2.09l.14.01zm-6.47 14.25l-.23.33-.08.41.08.41.23.33.33.23.41.08.41-.08.33-.23.23-.33.08-.41-.08-.41-.23-.33-.33-.23-.41-.08-.41.08z"/></svg>
<div class="t" style="left:111.60px;top:367.70px;font-size:13px;line-height:17px;color:#3c3c3c;font-family:'Liberation Sans', sans-serif;letter-spacing:0.296px;">models.py</div>
<svg class="r" style="left:90px;top:391.4px;" width="14" height="14" viewBox="0 0 24 24"><path fill="#2b69a6" d="M14.25.18l.9.2.73.26.59.3.45.32.34.34.25.34.16.33.1.3.04.26.02.2-.01.13V8.5l-.05.63-.13.55-.21.46-.26.38-.3.31-.33.25-.35.19-.35.14-.33.1-.3.07-.26.04-.21.02H8.77l-.69.05-.59.14-.5.22-.41.27-.33.32-.27.35-.2.36-.15.37-.1.35-.07.32-.04.27-.02.21v3.06H3.17l-.21-.03-.28-.07-.32-.12-.35-.18-.36-.26-.36-.36-.35-.46-.32-.59-.28-.73-.21-.88-.14-1.05-.05-1.23.06-1.22.16-1.04.24-.87.32-.71.36-.57.4-.44.42-.33.42-.24.4-.16.36-.1.32-.05.24-.01h.16l.06.01h8.16v-.83H6.18l-.01-2.75-.02-.37.05-.34.11-.31.17-.28.25-.26.31-.23.38-.2.44-.18.51-.15.58-.12.64-.1.71-.06.77-.04.84-.02 1.27.05zm-6.3 1.98l-.23.33-.08.41.08.41.23.34.33.22.41.09.41-.09.33-.22.23-.34.08-.41-.08-.41-.23-.33-.33-.22-.41-.09-.41.09z"/><path fill="#fbc224" d="M21.04 6.11l.28.06.32.12.35.18.36.27.36.35.35.47.32.59.28.73.21.88.14 1.04.05 1.23-.06 1.23-.16 1.04-.24.86-.32.71-.36.57-.4.45-.42.33-.42.24-.4.16-.36.09-.32.05-.24.02-.16-.01h-8.22v.82h5.84l.01 2.76.02.36-.05.34-.11.31-.17.29-.25.25-.31.24-.38.2-.44.17-.51.15-.58.13-.64.09-.71.07-.77.04-.84.01-1.27-.04-1.07-.14-.9-.2-.73-.25-.59-.3-.45-.33-.34-.34-.25-.34-.16-.33-.1-.3-.04-.25-.02-.2.01-.13v-5.34l.05-.64.13-.54.21-.46.26-.38.3-.32.33-.24.35-.2.35-.14.33-.1.3-.06.26-.04.21-.02.13-.01h5.84l.69-.05.59-.14.5-.21.41-.28.33-.32.27-.35.2-.36.15-.36.1-.35.07-.32.04-.28.02-.21V6.07h2.09l.14.01zm-6.47 14.25l-.23.33-.08.41.08.41.23.33.33.23.41.08.41-.08.33-.23.23-.33.08-.41-.08-.41-.23-.33-.33-.23-.41-.08-.41.08z"/></svg>
<div class="t" style="left:111.60px;top:389.70px;font-size:13px;line-height:17px;color:#3c3c3c;font-family:'Liberation Sans', sans-serif;letter-spacing:0.256px;">tests.py</div>
<svg class="r" style="left:90px;top:413.4px;" width="14" height="14" viewBox="0 0 24 24"><path fill="#2b69a6" d="M14.25.18l.9.2.73.26.59.3.45.32.34.34.25.34.16.33.1.3.04.26.02.2-.01.13V8.5l-.05.63-.13.55-.21.46-.26.38-.3.31-.33.25-.35.19-.35.14-.33.1-.3.07-.26.04-.21.02H8.77l-.69.05-.59.14-.5.22-.41.27-.33.32-.27.35-.2.36-.15.37-.1.35-.07.32-.04.27-.02.21v3.06H3.17l-.21-.03-.28-.07-.32-.12-.35-.18-.36-.26-.36-.36-.35-.46-.32-.59-.28-.73-.21-.88-.14-1.05-.05-1.23.06-1.22.16-1.04.24-.87.32-.71.36-.57.4-.44.42-.33.42-.24.4-.16.36-.1.32-.05.24-.01h.16l.06.01h8.16v-.83H6.18l-.01-2.75-.02-.37.05-.34.11-.31.17-.28.25-.26.31-.23.38-.2.44-.18.51-.15.58-.12.64-.1.71-.06.77-.04.84-.02 1.27.05zm-6.3 1.98l-.23.33-.08.41.08.41.23.34.33.22.41.09.41-.09.33-.22.23-.34.08-.41-.08-.41-.23-.33-.33-.22-.41-.09-.41.09z"/><path fill="#fbc224" d="M21.04 6.11l.28.06.32.12.35.18.36.27.36.35.35.47.32.59.28.73.21.88.14 1.04.05 1.23-.06 1.23-.16 1.04-.24.86-.32.71-.36.57-.4.45-.42.33-.42.24-.4.16-.36.09-.32.05-.24.02-.16-.01h-8.22v.82h5.84l.01 2.76.02.36-.05.34-.11.31-.17.29-.25.25-.31.24-.38.2-.44.17-.51.15-.58.13-.64.09-.71.07-.77.04-.84.01-1.27-.04-1.07-.14-.9-.2-.73-.25-.59-.3-.45-.33-.34-.34-.25-.34-.16-.33-.1-.3-.04-.25-.02-.2.01-.13v-5.34l.05-.64.13-.54.21-.46.26-.38.3-.32.33-.24.35-.2.35-.14.33-.1.3-.06.26-.04.21-.02.13-.01h5.84l.69-.05.59-.14.5-.21.41-.28.33-.32.27-.35.2-.36.15-.36.1-.35.07-.32.04-.28.02-.21V6.07h2.09l.14.01zm-6.47 14.25l-.23.33-.08.41.08.41.23.33.33.23.41.08.41-.08.33-.23.23-.33.08-.41-.08-.41-.23-.33-.33-.23-.41-.08-.41.08z"/></svg>
<div class="t" style="left:111.60px;top:411.70px;font-size:13px;line-height:17px;color:#3c3c3c;font-family:'Liberation Sans', sans-serif;letter-spacing:0.255px;">urls.py</div>
<svg class="r" style="left:90px;top:435.4px;" width="14" height="14" viewBox="0 0 24 24"><path fill="#2b69a6" d="M14.25.18l.9.2.73.26.59.3.45.32.34.34.25.34.16.33.1.3.04.26.02.2-.01.13V8.5l-.05.63-.13.55-.21.46-.26.38-.3.31-.33.25-.35.19-.35.14-.33.1-.3.07-.26.04-.21.02H8.77l-.69.05-.59.14-.5.22-.41.27-.33.32-.27.35-.2.36-.15.37-.1.35-.07.32-.04.27-.02.21v3.06H3.17l-.21-.03-.28-.07-.32-.12-.35-.18-.36-.26-.36-.36-.35-.46-.32-.59-.28-.73-.21-.88-.14-1.05-.05-1.23.06-1.22.16-1.04.24-.87.32-.71.36-.57.4-.44.42-.33.42-.24.4-.16.36-.1.32-.05.24-.01h.16l.06.01h8.16v-.83H6.18l-.01-2.75-.02-.37.05-.34.11-.31.17-.28.25-.26.31-.23.38-.2.44-.18.51-.15.58-.12.64-.1.71-.06.77-.04.84-.02 1.27.05zm-6.3 1.98l-.23.33-.08.41.08.41.23.34.33.22.41.09.41-.09.33-.22.23-.34.08-.41-.08-.41-.23-.33-.33-.22-.41-.09-.41.09z"/><path fill="#fbc224" d="M21.04 6.11l.28.06.32.12.35.18.36.27.36.35.35.47.32.59.28.73.21.88.14 1.04.05 1.23-.06 1.23-.16 1.04-.24.86-.32.71-.36.57-.4.45-.42.33-.42.24-.4.16-.36.09-.32.05-.24.02-.16-.01h-8.22v.82h5.84l.01 2.76.02.36-.05.34-.11.31-.17.29-.25.25-.31.24-.38.2-.44.17-.51.15-.58.13-.64.09-.71.07-.77.04-.84.01-1.27-.04-1.07-.14-.9-.2-.73-.25-.59-.3-.45-.33-.34-.34-.25-.34-.16-.33-.1-.3-.04-.25-.02-.2.01-.13v-5.34l.05-.64.13-.54.21-.46.26-.38.3-.32.33-.24.35-.2.35-.14.33-.1.3-.06.26-.04.21-.02.13-.01h5.84l.69-.05.59-.14.5-.21.41-.28.33-.32.27-.35.2-.36.15-.36.1-.35.07-.32.04-.28.02-.21V6.07h2.09l.14.01zm-6.47 14.25l-.23.33-.08.41.08.41.23.33.33.23.41.08.41-.08.33-.23.23-.33.08-.41-.08-.41-.23-.33-.33-.23-.41-.08-.41.08z"/></svg>
<div class="t" style="left:111.60px;top:433.70px;font-size:13px;line-height:17px;color:#3c3c3c;font-family:'Liberation Sans', sans-serif;letter-spacing:0.285px;">views.py</div>
<svg class="r" style="left:62.2px;top:456.5px;" width="16" height="16" viewBox="0 0 16 16"><path d="M3.2 5.5 L8 10.3 L12.8 5.5" fill="none" stroke="#424242" stroke-width="1.2"/></svg>
<svg class="r" style="left:80.56px;top:455.36px;" width="17.28" height="17.28" viewBox="0 0 24 24"><path fill="#90a4ae" d="M19 20H4a2 2 0 0 1-2-2V6c0-1.11.89-2 2-2h6l2 2h7a2 2 0 0 1 2 2H4v10l2.14-8h17.07l-2.28 8.5c-.23.87-1.01 1.5-1.93 1.5z"/></svg>
<div class="t" style="left:103.60px;top:455.70px;font-size:13px;line-height:17px;color:#3c3c3c;font-family:'Liberation Sans', sans-serif;letter-spacing:0.366px;">venv</div>
<svg class="r" style="left:70.5px;top:478px;" width="16" height="16" viewBox="0 0 16 16"><path d="M5.5 3.2 L10.3 8 L5.5 12.8" fill="none" stroke="#424242" stroke-width="1.2"/></svg>
<svg class="r" style="left:88.56px;top:477.36px;" width="17.28" height="17.28" viewBox="0 0 24 24"><path fill="#ef5350" d="M10 4H4c-1.11 0-2 .89-2 2v12a2 2 0 0 0 2 2h16a2 2 0 0 0 2-2V8a2 2 0 0 0-2-2h-8l-2-2z"/><rect x="12" y="10" width="9" height="9" rx="1.5" fill="#ffcdd2"/></svg>
<div class="t" style="left:111.60px;top:477.70px;font-size:13px;line-height:17px;color:#3c3c3c;font-family:'Liberation Sans', sans-serif;letter-spacing:0.347px;">bin</div>
<svg class="r" style="left:70.5px;top:500px;" width="16" height="16" viewBox="0 0 16 16"><path d="M5.5 3.2 L10.3 8 L5.5 12.8" fill="none" stroke="#424242" stroke-width="1.2"/></svg>
<svg class="r" style="left:88.56px;top:499.36px;" width="17.28" height="17.28" viewBox="0 0 24 24"><path fill="#039be5" d="M10 4H4c-1.11 0-2 .89-2 2v12a2 2 0 0 0 2 2h16a2 2 0 0 0 2-2V8a2 2 0 0 0-2-2h-8l-2-2z"/><circle cx="17" cy="16" r="5" fill="#b3e5fc"/><path d="M17 13v6M14 16h6" stroke="#039be5" stroke-width="1.8"/></svg>
<div class="t" style="left:111.60px;top:499.70px;font-size:13px;line-height:17px;color:#3c3c3c;font-family:'Liberation Sans', sans-serif;letter-spacing:0.275px;">include</div>
<svg class="r" style="left:70.5px;top:522px;" width="16" height="16" viewBox="0 0 16 16"><path d="M5.5 3.2 L10.3 8 L5.5 12.8" fill="none" stroke="#424242" stroke-width="1.2"/></svg>
<svg class="r" style="left:88.56px;top:521.36px;" width="17.28" height="17.28" viewBox="0 0 24 24"><path fill="#c0ca33" d="M10 4H4c-1.11 0-2 .89-2 2v12a2 2 0 0 0 2 2h16a2 2 0 0 0 2-2V8a2 2 0 0 0-2-2h-8l-2-2z"/><rect x="13" y="10" width="8" height="8" rx="1.5" fill="#f0f4c3"/><path d="M15 13h4M15 15.5h4" stroke="#c0ca33" stroke-width="1.3"/></svg>
<div class="t" style="left:111.60px;top:521.70px;font-size:13px;line-height:17px;color:#3c3c3c;font-family:'Liberation Sans', sans-serif;letter-spacing:0.260px;">lib</div>
<svg class="r" style="left:89px;top:544px;" width="16" height="16" viewBox="0 0 16 16"><path fill="#1e88e5" d="M14.77 8.67 L14.51 9.97 L12.41 10.36 L11.87 11.17 L12.31 13.26 L11.21 14.00 L9.45 12.78 L8.49 12.98 L7.33 14.77 L6.03 14.51 L5.64 12.41 L4.83 11.87 L2.74 12.31 L2.00 11.21 L3.22 9.45 L3.02 8.49 L1.23 7.33 L1.49 6.03 L3.59 5.64 L4.13 4.83 L3.69 2.74 L4.79 2.00 L6.55 3.22 L7.51 3.02 L8.67 1.23 L9.97 1.49 L10.36 3.59 L11.17 4.13 L13.26 3.69 L14.00 4.79 L12.78 6.55 L12.98 7.51 Z"/><circle cx="8" cy="8" r="2.3" fill="#f3f3f3"/></svg>
<div class="t" style="left:111.60px;top:543.70px;font-size:13px;line-height:17px;color:#3c3c3c;font-family:'Liberation Sans', sans-serif;letter-spacing:0.272px;">pyvenv.cfg</div>
<svg class="r" style="left:82px;top:566px;" width="16" height="16" viewBox="0 0 16 16"><path d="M2.5 1.5 H8.5 L12.5 5.5 V14.5 H2.5 Z M8.5 1.5 V5.5 H12.5" fill="none" stroke="#29b6f6" stroke-width="1.4" stroke-linejoin="round"/></svg>
<div class="t" style="left:103.60px;top:565.70px;font-size:13px;line-height:17px;color:#3c3c3c;font-family:'Liberation Sans', sans-serif;letter-spacing:0.373px;">db.sqlite3</div>
<svg class="r" style="left:82px;top:589.4px;" width="14" height="14" viewBox="0 0 24 24"><path fill="#2b69a6" d="M14.25.18l.9.2.73.26.59.3.45.32.34.34.25.34.16.33.1.3.04.26.02.2-.01.13V8.5l-.05.63-.13.55-.21.46-.26.38-.3.31-.33.25-.35.19-.35.14-.33.1-.3.07-.26.04-.21.02H8.77l-.69.05-.59.14-.5.22-.41.27-.33.32-.27.35-.2.36-.15.37-.1.35-.07.32-.04.27-.02.21v3.06H3.17l-.21-.03-.28-.07-.32-.12-.35-.18-.36-.26-.36-.36-.35-.46-.32-.59-.28-.73-.21-.88-.14-1.05-.05-1.23.06-1.22.16-1.04.24-.87.32-.71.36-.57.4-.44.42-.33.42-.24.4-.16.36-.1.32-.05.24-.01h.16l.06.01h8.16v-.83H6.18l-.01-2.75-.02-.37.05-.34.11-.31.17-.28.25-.26.31-.23.38-.2.44-.18.51-.15.58-.12.64-.1.71-.06.77-.04.84-.02 1.27.05zm-6.3 1.98l-.23.33-.08.41.08.41.23.34.33.22.41.09.41-.09.33-.22.23-.34.08-.41-.08-.41-.23-.33-.33-.22-.41-.09-.41.09z"/><path fill="#fbc224" d="M21.04 6.11l.28.06.32.12.35.18.36.27.36.35.35.47.32.59.28.73.21.88.14 1.04.05 1.23-.06 1.23-.16 1.04-.24.86-.32.71-.36.57-.4.45-.42.33-.42.24-.4.16-.36.09-.32.05-.24.02-.16-.01h-8.22v.82h5.84l.01 2.76.02.36-.05.34-.11.31-.17.29-.25.25-.31.24-.38.2-.44.17-.51.15-.58.13-.64.09-.71.07-.77.04-.84.01-1.27-.04-1.07-.14-.9-.2-.73-.25-.59-.3-.45-.33-.34-.34-.25-.34-.16-.33-.1-.3-.04-.25-.02-.2.01-.13v-5.34l.05-.64.13-.54.21-.46.26-.38.3-.32.33-.24.35-.2.35-.14.33-.1.3-.06.26-.04.21-.02.13-.01h5.84l.69-.05.59-.14.5-.21.41-.28.33-.32.27-.35.2-.36.15-.36.1-.35.07-.32.04-.28.02-.21V6.07h2.09l.14.01zm-6.47 14.25l-.23.33-.08.41.08.41.23.33.33.23.41.08.41-.08.33-.23.23-.33.08-.41-.08-.41-.23-.33-.33-.23-.41-.08-.41.08z"/></svg>
<div class="t" style="left:103.60px;top:587.70px;font-size:13px;line-height:17px;color:#3c3c3c;font-family:'Liberation Sans', sans-serif;letter-spacing:0.069px;">manage.py</div>
<svg class="r" style="left:82px;top:611.4px;" width="14" height="14" viewBox="0 0 24 24"><path fill="#2b69a6" d="M14.25.18l.9.2.73.26.59.3.45.32.34.34.25.34.16.33.1.3.04.26.02.2-.01.13V8.5l-.05.63-.13.55-.21.46-.26.38-.3.31-.33.25-.35.19-.35.14-.33.1-.3.07-.26.04-.21.02H8.77l-.69.05-.59.14-.5.22-.41.27-.33.32-.27.35-.2.36-.15.37-.1.35-.07.32-.04.27-.02.21v3.06H3.17l-.21-.03-.28-.07-.32-.12-.35-.18-.36-.26-.36-.36-.35-.46-.32-.59-.28-.73-.21-.88-.14-1.05-.05-1.23.06-1.22.16-1.04.24-.87.32-.71.36-.57.4-.44.42-.33.42-.24.4-.16.36-.1.32-.05.24-.01h.16l.06.01h8.16v-.83H6.18l-.01-2.75-.02-.37.05-.34.11-.31.17-.28.25-.26.31-.23.38-.2.44-.18.51-.15.58-.12.64-.1.71-.06.77-.04.84-.02 1.27.05zm-6.3 1.98l-.23.33-.08.41.08.41.23.34.33.22.41.09.41-.09.33-.22.23-.34.08-.41-.08-.41-.23-.33-.33-.22-.41-.09-.41.09z"/><path fill="#fbc224" d="M21.04 6.11l.28.06.32.12.35.18.36.27.36.35.35.47.32.59.28.73.21.88.14 1.04.05 1.23-.06 1.23-.16 1.04-.24.86-.32.71-.36.57-.4.45-.42.33-.42.24-.4.16-.36.09-.32.05-.24.02-.16-.01h-8.22v.82h5.84l.01 2.76.02.36-.05.34-.11.31-.17.29-.25.25-.31.24-.38.2-.44.17-.51.15-.58.13-.64.09-.71.07-.77.04-.84.01-1.27-.04-1.07-.14-.9-.2-.73-.25-.59-.3-.45-.33-.34-.34-.25-.34-.16-.33-.1-.3-.04-.25-.02-.2.01-.13v-5.34l.05-.64.13-.54.21-.46.26-.38.3-.32.33-.24.35-.2.35-.14.33-.1.3-.06.26-.04.21-.02.13-.01h5.84l.69-.05.59-.14.5-.21.41-.28.33-.32.27-.35.2-.36.15-.36.1-.35.07-.32.04-.28.02-.21V6.07h2.09l.14.01zm-6.47 14.25l-.23.33-.08.41.08.41.23.33.33.23.41.08.41-.08.33-.23.23-.33.08-.41-.08-.41-.23-.33-.33-.23-.41-.08-.41.08z"/></svg>
<div class="t" style="left:103.60px;top:609.70px;font-size:13px;line-height:17px;color:#3c3c3c;font-family:'Liberation Sans', sans-serif;letter-spacing:0.085px;">my_program.py</div>
<div class="r" style="left:348px;top:22px;width:127px;height:35px;background:#ececec;"></div>
<div class="r" style="left:475px;top:22px;width:119px;height:35px;background:#ffffff;"></div>
<svg class="r" style="left:358px;top:32.9px;" width="14" height="14" viewBox="0 0 24 24"><path fill="#2b69a6" d="M14.25.18l.9.2.73.26.59.3.45.32.34.34.25.34.16.33.1.3.04.26.02.2-.01.13V8.5l-.05.63-.13.55-.21.46-.26.38-.3.31-.33.25-.35.19-.35.14-.33.1-.3.07-.26.04-.21.02H8.77l-.69.05-.59.14-.5.22-.41.27-.33.32-.27.35-.2.36-.15.37-.1.35-.07.32-.04.27-.02.21v3.06H3.17l-.21-.03-.28-.07-.32-.12-.35-.18-.36-.26-.36-.36-.35-.46-.32-.59-.28-.73-.21-.88-.14-1.05-.05-1.23.06-1.22.16-1.04.24-.87.32-.71.36-.57.4-.44.42-.33.42-.24.4-.16.36-.1.32-.05.24-.01h.16l.06.01h8.16v-.83H6.18l-.01-2.75-.02-.37.05-.34.11-.31.17-.28.25-.26.31-.23.38-.2.44-.18.51-.15.58-.12.64-.1.71-.06.77-.04.84-.02 1.27.05zm-6.3 1.98l-.23.33-.08.41.08.41.23.34.33.22.41.09.41-.09.33-.22.23-.34.08-.41-.08-.41-.23-.33-.33-.22-.41-.09-.41.09z"/><path fill="#fbc224" d="M21.04 6.11l.28.06.32.12.35.18.36.27.36.35.35.47.32.59.28.73.21.88.14 1.04.05 1.23-.06 1.23-.16 1.04-.24.86-.32.71-.36.57-.4.45-.42.33-.42.24-.4.16-.36.09-.32.05-.24.02-.16-.01h-8.22v.82h5.84l.01 2.76.02.36-.05.34-.11.31-.17.29-.25.25-.31.24-.38.2-.44.17-.51.15-.58.13-.64.09-.71.07-.77.04-.84.01-1.27-.04-1.07-.14-.9-.2-.73-.25-.59-.3-.45-.33-.34-.34-.25-.34-.16-.33-.1-.3-.04-.25-.02-.2.01-.13v-5.34l.05-.64.13-.54.21-.46.26-.38.3-.32.33-.24.35-.2.35-.14.33-.1.3-.06.26-.04.21-.02.13-.01h5.84l.69-.05.59-.14.5-.21.41-.28.33-.32.27-.35.2-.36.15-.36.1-.35.07-.32.04-.28.02-.21V6.07h2.09l.14.01zm-6.47 14.25l-.23.33-.08.41.08.41.23.33.33.23.41.08.41-.08.33-.23.23-.33.08-.41-.08-.41-.23-.33-.33-.23-.41-.08-.41.08z"/></svg>
<div class="t" style="left:379.80px;top:30.70px;font-size:13px;line-height:17px;color:#717171;font-family:'Liberation Sans', sans-serif;letter-spacing:0.346px;">settings.py</div>
<svg class="r" style="left:486px;top:32.9px;" width="14" height="14" viewBox="0 0 24 24"><path fill="#2b69a6" d="M14.25.18l.9.2.73.26.59.3.45.32.34.34.25.34.16.33.1.3.04.26.02.2-.01.13V8.5l-.05.63-.13.55-.21.46-.26.38-.3.31-.33.25-.35.19-.35.14-.33.1-.3.07-.26.04-.21.02H8.77l-.69.05-.59.14-.5.22-.41.27-.33.32-.27.35-.2.36-.15.37-.1.35-.07.32-.04.27-.02.21v3.06H3.17l-.21-.03-.28-.07-.32-.12-.35-.18-.36-.26-.36-.36-.35-.46-.32-.59-.28-.73-.21-.88-.14-1.05-.05-1.23.06-1.22.16-1.04.24-.87.32-.71.36-.57.4-.44.42-.33.42-.24.4-.16.36-.1.32-.05.24-.01h.16l.06.01h8.16v-.83H6.18l-.01-2.75-.02-.37.05-.34.11-.31.17-.28.25-.26.31-.23.38-.2.44-.18.51-.15.58-.12.64-.1.71-.06.77-.04.84-.02 1.27.05zm-6.3 1.98l-.23.33-.08.41.08.41.23.34.33.22.41.09.41-.09.33-.22.23-.34.08-.41-.08-.41-.23-.33-.33-.22-.41-.09-.41.09z"/><path fill="#fbc224" d="M21.04 6.11l.28.06.32.12.35.18.36.27.36.35.35.47.32.59.28.73.21.88.14 1.04.05 1.23-.06 1.23-.16 1.04-.24.86-.32.71-.36.57-.4.45-.42.33-.42.24-.4.16-.36.09-.32.05-.24.02-.16-.01h-8.22v.82h5.84l.01 2.76.02.36-.05.34-.11.31-.17.29-.25.25-.31.24-.38.2-.44.17-.51.15-.58.13-.64.09-.71.07-.77.04-.84.01-1.27-.04-1.07-.14-.9-.2-.73-.25-.59-.3-.45-.33-.34-.34-.25-.34-.16-.33-.1-.3-.04-.25-.02-.2.01-.13v-5.34l.05-.64.13-.54.21-.46.26-.38.3-.32.33-.24.35-.2.35-.14.33-.1.3-.06.26-.04.21-.02.13-.01h5.84l.69-.05.59-.14.5-.21.41-.28.33-.32.27-.35.2-.36.15-.36.1-.35.07-.32.04-.28.02-.21V6.07h2.09l.14.01zm-6.47 14.25l-.23.33-.08.41.08.41.23.33.33.23.41.08.41-.08.33-.23.23-.33.08-.41-.08-.41-.23-.33-.33-.23-.41-.08-.41.08z"/></svg>
<div class="t" style="left:507.00px;top:30.70px;font-size:13px;line-height:17px;color:#333333;font-family:'Liberation Sans', sans-serif;letter-spacing:0.219px;">urls.py</div>
<svg class="r" style="left:570px;top:32px;" width="16" height="16" viewBox="0 0 16 16"><path d="M3.7 3.7 L12.3 12.3 M12.3 3.7 L3.7 12.3" stroke="#424242" stroke-width="1.3" fill="none"/></svg>
<svg class="r" style="left:920px;top:22px;" width="102" height="35" viewBox="920 22 102 35"><path d="M929.3 34.5 L937.2 39.8 L929.3 45.1 Z" fill="none" stroke="#388a34" stroke-width="1.5" stroke-linejoin="round"/><g fill="none" stroke="#424242" stroke-width="1.2"><rect x="959.6" y="33.6" width="12" height="11.6" rx="1"/><path d="M965.6 33.6 V45.2"/></g><g fill="#424242"><circle cx="992" cy="39.6" r="1"/><circle cx="997" cy="39.6" r="1"/><circle cx="1002" cy="39.6" r="1"/></g></svg>
<div class="t" style="left:363.60px;top:59.90px;font-size:13px;line-height:17px;color:#6f6f6f;font-family:'Liberation Sans', sans-serif;letter-spacing:0.418px;">config</div>
<svg class="r" style="left:403px;top:64px;" width="12" height="10" viewBox="0 0 12 10"><path d="M3.6 1.2 L7.6 5 L3.6 8.8" fill="none" stroke="#6f6f6f" stroke-width="1.1"/></svg>
<svg class="r" style="left:418px;top:61.2px;" width="14" height="14" viewBox="0 0 24 24"><path fill="#2b69a6" d="M14.25.18l.9.2.73.26.59.3.45.32.34.34.25.34.16.33.1.3.04.26.02.2-.01.13V8.5l-.05.63-.13.55-.21.46-.26.38-.3.31-.33.25-.35.19-.35.14-.33.1-.3.07-.26.04-.21.02H8.77l-.69.05-.59.14-.5.22-.41.27-.33.32-.27.35-.2.36-.15.37-.1.35-.07.32-.04.27-.02.21v3.06H3.17l-.21-.03-.28-.07-.32-.12-.35-.18-.36-.26-.36-.36-.35-.46-.32-.59-.28-.73-.21-.88-.14-1.05-.05-1.23.06-1.22.16-1.04.24-.87.32-.71.36-.57.4-.44.42-.33.42-.24.4-.16.36-.1.32-.05.24-.01h.16l.06.01h8.16v-.83H6.18l-.01-2.75-.02-.37.05-.34.11-.31.17-.28.25-.26.31-.23.38-.2.44-.18.51-.15.58-.12.64-.1.71-.06.77-.04.84-.02 1.27.05zm-6.3 1.98l-.23.33-.08.41.08.41.23.34.33.22.41.09.41-.09.33-.22.23-.34.08-.41-.08-.41-.23-.33-.33-.22-.41-.09-.41.09z"/><path fill="#fbc224" d="M21.04 6.11l.28.06.32.12.35.18.36.27.36.35.35.47.32.59.28.73.21.88.14 1.04.05 1.23-.06 1.23-.16 1.04-.24.86-.32.71-.36.57-.4.45-.42.33-.42.24-.4.16-.36.09-.32.05-.24.02-.16-.01h-8.22v.82h5.84l.01 2.76.02.36-.05.34-.11.31-.17.29-.25.25-.31.24-.38.2-.44.17-.51.15-.58.13-.64.09-.71.07-.77.04-.84.01-1.27-.04-1.07-.14-.9-.2-.73-.25-.59-.3-.45-.33-.34-.34-.25-.34-.16-.33-.1-.3-.04-.25-.02-.2.01-.13v-5.34l.05-.64.13-.54.21-.46.26-.38.3-.32.33-.24.35-.2.35-.14.33-.1.3-.06.26-.04.21-.02.13-.01h5.84l.69-.05.59-.14.5-.21.41-.28.33-.32.27-.35.2-.36.15-.36.1-.35.07-.32.04-.28.02-.21V6.07h2.09l.14.01zm-6.47 14.25l-.23.33-.08.41.08.41.23.33.33.23.41.08.41-.08.33-.23.23-.33.08-.41-.08-.41-.23-.33-.33-.23-.41-.08-.41.08z"/></svg>
<div class="t" style="left:439.50px;top:59.90px;font-size:13px;line-height:17px;color:#6f6f6f;font-family:'Liberation Sans', sans-serif;letter-spacing:0.136px;">urls.py</div>
<svg class="r" style="left:481.3px;top:64px;" width="12" height="10" viewBox="0 0 12 10"><path d="M3.6 1.2 L7.6 5 L3.6 8.8" fill="none" stroke="#6f6f6f" stroke-width="1.1"/></svg>
<div class="t" style="left:495.80px;top:59.90px;font-size:13px;line-height:17px;color:#6f6f6f;font-family:'Liberation Sans', sans-serif;letter-spacing:-0.728px;">...</div>
<div class="r" style="left:348px;top:79px;width:581px;height:4px;background:linear-gradient(#e2e2e6,rgba(255,255,255,0));"></div>
<div class="r" style="left:413px;top:224.5px;width:516px;height:18px;box-sizing:border-box;border:2px solid #eeeeee;border-right:none;"></div>
<div class="r" style="left:413px;top:169px;width:1px;height:36px;background:#d3d3d3;"></div>
<div class="t" style="left:372.04px;top:80.63px;font-size:12.3px;line-height:18px;color:#237893;font-family:'Liberation Mono', monospace;letter-spacing:-0.001px;-webkit-text-stroke:0.25px #237893;">15</div>
<div class="t" style="left:413.00px;top:80.63px;font-size:12.3px;line-height:18px;color:#a31515;font-family:'Liberation Mono', monospace;letter-spacing:-0.001px;-webkit-text-stroke:0.25px #a31515;">&quot;&quot;&quot;</div>
<div class="t" style="left:372.04px;top:98.63px;font-size:12.3px;line-height:18px;color:#237893;font-family:'Liberation Mono', monospace;letter-spacing:-0.001px;-webkit-text-stroke:0.25px #237893;">16</div>
<div class="t" style="left:413.00px;top:98.63px;font-size:12.3px;line-height:18px;color:#af00db;font-family:'Liberation Mono', monospace;letter-spacing:-0.001px;-webkit-text-stroke:0.25px #af00db;">from</div>
<div class="t" style="left:442.52px;top:98.63px;font-size:12.3px;line-height:18px;color:#d8d8e0;font-family:'Liberation Mono', monospace;letter-spacing:-0.001px;-webkit-text-stroke:0.25px #d8d8e0;">·</div>
<div class="t" style="left:449.90px;top:98.63px;font-size:12.3px;line-height:18px;color:#000000;font-family:'Liberation Mono', monospace;letter-spacing:-0.001px;-webkit-text-stroke:0.25px #000000;">django.contrib</div>
<div class="t" style="left:553.22px;top:98.63px;font-size:12.3px;line-height:18px;color:#d8d8e0;font-family:'Liberation Mono', monospace;letter-spacing:-0.001px;-webkit-text-stroke:0.25px #d8d8e0;">·</div>
<div class="t" style="left:560.60px;top:98.63px;font-size:12.3px;line-height:18px;color:#af00db;font-family:'Liberation Mono', monospace;letter-spacing:-0.001px;-webkit-text-stroke:0.25px #af00db;">import</div>
<div class="t" style="left:604.88px;top:98.63px;font-size:12.3px;line-height:18px;color:#d8d8e0;font-family:'Liberation Mono', monospace;letter-spacing:-0.001px;-webkit-text-stroke:0.25px #d8d8e0;">·</div>
<div class="t" style="left:612.26px;top:98.63px;font-size:12.3px;line-height:18px;color:#000000;font-family:'Liberation Mono', monospace;letter-spacing:-0.001px;-webkit-text-stroke:0.25px #000000;">admin</div>
<div class="t" style="left:372.04px;top:116.63px;font-size:12.3px;line-height:18px;color:#237893;font-family:'Liberation Mono', monospace;letter-spacing:-0.001px;-webkit-text-stroke:0.25px #237893;">17</div>
<div class="t" style="left:413.00px;top:116.63px;font-size:12.3px;line-height:18px;color:#af00db;font-family:'Liberation Mono', monospace;letter-spacing:-0.001px;-webkit-text-stroke:0.25px #af00db;">from</div>
<div class="t" style="left:442.52px;top:116.63px;font-size:12.3px;line-height:18px;color:#d8d8e0;font-family:'Liberation Mono', monospace;letter-spacing:-0.001px;-webkit-text-stroke:0.25px #d8d8e0;">·</div>
<div class="t" style="left:449.90px;top:116.63px;font-size:12.3px;line-height:18px;color:#000000;font-family:'Liberation Mono', monospace;letter-spacing:-0.001px;-webkit-text-stroke:0.25px #000000;">django.urls</div>
<div class="t" style="left:531.08px;top:116.63px;font-size:12.3px;line-height:18px;color:#d8d8e0;font-family:'Liberation Mono', monospace;letter-spacing:-0.001px;-webkit-text-stroke:0.25px #d8d8e0;">·</div>
<div class="t" style="left:538.46px;top:116.63px;font-size:12.3px;line-height:18px;color:#af00db;font-family:'Liberation Mono', monospace;letter-spacing:-0.001px;-webkit-text-stroke:0.25px #af00db;">import</div>
<div class="t" style="left:582.74px;top:116.63px;font-size:12.3px;line-height:18px;color:#d8d8e0;font-family:'Liberation Mono', monospace;letter-spacing:-0.001px;-webkit-text-stroke:0.25px #d8d8e0;">·</div>
<div class="t" style="left:590.12px;top:116.63px;font-size:12.3px;line-height:18px;color:#000000;font-family:'Liberation Mono', monospace;letter-spacing:-0.001px;-webkit-text-stroke:0.25px #000000;">path,</div>
<div class="t" style="left:627.02px;top:116.63px;font-size:12.3px;line-height:18px;color:#d8d8e0;font-family:'Liberation Mono', monospace;letter-spacing:-0.001px;-webkit-text-stroke:0.25px #d8d8e0;">·</div>
<div class="t" style="left:634.40px;top:116.63px;font-size:12.3px;line-height:18px;color:#000000;font-family:'Liberation Mono', monospace;letter-spacing:-0.001px;-webkit-text-stroke:0.25px #000000;">include</div>
<div class="t" style="left:372.04px;top:134.63px;font-size:12.3px;line-height:18px;color:#237893;font-family:'Liberation Mono', monospace;letter-spacing:-0.001px;-webkit-text-stroke:0.25px #237893;">18</div>
<div class="t" style="left:372.04px;top:152.63px;font-size:12.3px;line-height:18px;color:#237893;font-family:'Liberation Mono', monospace;letter-spacing:-0.001px;-webkit-text-stroke:0.25px #237893;">19</div>
<div class="t" style="left:413.00px;top:152.63px;font-size:12.3px;line-height:18px;color:#000000;font-family:'Liberation Mono', monospace;letter-spacing:-0.001px;-webkit-text-stroke:0.25px #000000;">urlpatterns</div>
<div class="t" style="left:494.18px;top:152.63px;font-size:12.3px;line-height:18px;color:#d8d8e0;font-family:'Liberation Mono', monospace;letter-spacing:-0.001px;-webkit-text-stroke:0.25px #d8d8e0;">·</div>
<div class="t" style="left:501.56px;top:152.63px;font-size:12.3px;line-height:18px;color:#000000;font-family:'Liberation Mono', monospace;letter-spacing:-0.001px;-webkit-text-stroke:0.25px #000000;">=</div>
<div class="t" style="left:508.94px;top:152.63px;font-size:12.3px;line-height:18px;color:#d8d8e0;font-family:'Liberation Mono', monospace;letter-spacing:-0.001px;-webkit-text-stroke:0.25px #d8d8e0;">·</div>
<div class="t" style="left:516.32px;top:152.63px;font-size:12.3px;line-height:18px;color:#000000;font-family:'Liberation Mono', monospace;letter-spacing:-0.001px;-webkit-text-stroke:0.25px #000000;">[</div>
<div class="t" style="left:372.04px;top:170.63px;font-size:12.3px;line-height:18px;color:#237893;font-family:'Liberation Mono', monospace;letter-spacing:-0.001px;-webkit-text-stroke:0.25px #237893;">20</div>
<div class="t" style="left:413.00px;top:170.63px;font-size:12.3px;line-height:18px;color:#d8d8e0;font-family:'Liberation Mono', monospace;letter-spacing:-0.001px;-webkit-text-stroke:0.25px #d8d8e0;">·</div>
<div class="t" style="left:420.38px;top:170.63px;font-size:12.3px;line-height:18px;color:#d8d8e0;font-family:'Liberation Mono', monospace;letter-spacing:-0.001px;-webkit-text-stroke:0.25px #d8d8e0;">·</div>
<div class="t" style="left:427.76px;top:170.63px;font-size:12.3px;line-height:18px;color:#d8d8e0;font-family:'Liberation Mono', monospace;letter-spacing:-0.001px;-webkit-text-stroke:0.25px #d8d8e0;">·</div>
<div class="t" style="left:435.14px;top:170.63px;font-size:12.3px;line-height:18px;color:#d8d8e0;font-family:'Liberation Mono', monospace;letter-spacing:-0.001px;-webkit-text-stroke:0.25px #d8d8e0;">·</div>
<div class="t" style="left:442.52px;top:170.63px;font-size:12.3px;line-height:18px;color:#000000;font-family:'Liberation Mono', monospace;letter-spacing:-0.001px;-webkit-text-stroke:0.25px #000000;">path(</div>
<div class="t" style="left:479.42px;top:170.63px;font-size:12.3px;line-height:18px;color:#a31515;font-family:'Liberation Mono', monospace;letter-spacing:-0.001px;-webkit-text-stroke:0.25px #a31515;">&#x27;&#x27;</div>
<div class="t" style="left:494.18px;top:170.63px;font-size:12.3px;line-height:18px;color:#000000;font-family:'Liberation Mono', monospace;letter-spacing:-0.001px;-webkit-text-stroke:0.25px #000000;">,</div>
<div class="t" style="left:501.56px;top:170.63px;font-size:12.3px;line-height:18px;color:#d8d8e0;font-family:'Liberation Mono', monospace;letter-spacing:-0.001px;-webkit-text-stroke:0.25px #d8d8e0;">·</div>
<div class="t" style="left:508.94px;top:170.63px;font-size:12.3px;line-height:18px;color:#000000;font-family:'Liberation Mono', monospace;letter-spacing:-0.001px;-webkit-text-stroke:0.25px #000000;">include(</div>
<div class="t" style="left:567.98px;top:170.63px;font-size:12.3px;line-height:18px;color:#a31515;font-family:'Liberation Mono', monospace;letter-spacing:-0.001px;-webkit-text-stroke:0.25px #a31515;">&#x27;mysite.urls&#x27;</div>
<div class="t" style="left:663.92px;top:170.63px;font-size:12.3px;line-height:18px;color:#000000;font-family:'Liberation Mono', monospace;letter-spacing:-0.001px;-webkit-text-stroke:0.25px #000000;">)),</div>
<div class="t" style="left:372.04px;top:188.63px;font-size:12.3px;line-height:18px;color:#237893;font-family:'Liberation Mono', monospace;letter-spacing:-0.001px;-webkit-text-stroke:0.25px #237893;">21</div>
<div class="t" style="left:413.00px;top:188.63px;font-size:12.3px;line-height:18px;color:#d8d8e0;font-family:'Liberation Mono', monospace;letter-spacing:-0.001px;-webkit-text-stroke:0.25px #d8d8e0;">·</div>
<div class="t" style="left:420.38px;top:188.63px;font-size:12.3px;line-height:18px;color:#d8d8e0;font-family:'Liberation Mono', monospace;letter-spacing:-0.001px;-webkit-text-stroke:0.25px #d8d8e0;">·</div>
<div class="t" style="left:427.76px;top:188.63px;font-size:12.3px;line-height:18px;color:#d8d8e0;font-family:'Liberation Mono', monospace;letter-spacing:-0.001px;-webkit-text-stroke:0.25px #d8d8e0;">·</div>
<div class="t" style="left:435.14px;top:188.63px;font-size:12.3px;line-height:18px;color:#d8d8e0;font-family:'Liberation Mono', monospace;letter-spacing:-0.001px;-webkit-text-stroke:0.25px #d8d8e0;">·</div>
<div class="t" style="left:442.52px;top:188.63px;font-size:12.3px;line-height:18px;color:#000000;font-family:'Liberation Mono', monospace;letter-spacing:-0.001px;-webkit-text-stroke:0.25px #000000;">path(</div>
<div class="t" style="left:479.42px;top:188.63px;font-size:12.3px;line-height:18px;color:#a31515;font-family:'Liberation Mono', monospace;letter-spacing:-0.001px;-webkit-text-stroke:0.25px #a31515;">&#x27;admin/&#x27;</div>
<div class="t" style="left:538.46px;top:188.63px;font-size:12.3px;line-height:18px;color:#000000;font-family:'Liberation Mono', monospace;letter-spacing:-0.001px;-webkit-text-stroke:0.25px #000000;">,</div>
<div class="t" style="left:545.84px;top:188.63px;font-size:12.3px;line-height:18px;color:#d8d8e0;font-family:'Liberation Mono', monospace;letter-spacing:-0.001px;-webkit-text-stroke:0.25px #d8d8e0;">·</div>
<div class="t" style="left:553.22px;top:188.63px;font-size:12.3px;line-height:18px;color:#000000;font-family:'Liberation Mono', monospace;letter-spacing:-0.001px;-webkit-text-stroke:0.25px #000000;">admin.site.urls),</div>
<div class="t" style="left:372.04px;top:206.63px;font-size:12.3px;line-height:18px;color:#237893;font-family:'Liberation Mono', monospace;letter-spacing:-0.001px;-webkit-text-stroke:0.25px #237893;">22</div>
<div class="t" style="left:413.00px;top:206.63px;font-size:12.3px;line-height:18px;color:#000000;font-family:'Liberation Mono', monospace;letter-spacing:-0.001px;-webkit-text-stroke:0.25px #000000;">]</div>
<div class="t" style="left:372.04px;top:224.63px;font-size:12.3px;line-height:18px;color:#237893;font-family:'Liberation Mono', monospace;letter-spacing:-0.001px;-webkit-text-stroke:0.25px #237893;">23</div>
<svg class="r" style="left:453px;top:253.2px;" width="14" height="20" viewBox="0 0 14 20"><path d="M2 2.5 L2 13.8 L4.6 11.4 L7 16.2 L8.6 15.5 L6.4 10.8 L10 10.8 Z" fill="#c8c8c8" opacity="0.6"/><path d="M1 1 L1 12 L3.6 9.6 L6 14.4 L7.6 13.7 L5.4 9 L8.9 9 Z" fill="#000" stroke="#fff" stroke-width="0.8" stroke-linejoin="round"/></svg>
<div class="r" style="left:929px;top:79px;width:1px;height:349px;background:#e2e2ea;"></div>
<div class="r" style="left:930px;top:79px;width:1px;height:349px;background:#f2f2f6;"></div>
<svg class="r" style="left:929px;top:79px;" width="80" height="50" viewBox="929 79 80 50"><rect x="939" y="79" width="9" height="2" fill="#e8b0b5"/><rect x="949" y="79" width="3" height="2" fill="#e8b0b5"/><rect x="953" y="79" width="13" height="2" fill="#e8b0b5"/><rect x="939" y="83" width="3" height="2" fill="#e8b0b5"/><rect x="943" y="83" width="13" height="2" fill="#e8b0b5"/><rect x="957" y="83" width="4" height="2" fill="#e8b0b5"/><rect x="962" y="83" width="6" height="2" fill="#e8b0b5"/><rect x="969" y="83" width="4" height="2" fill="#e8b0b5"/><rect x="974" y="83" width="2" height="2" fill="#e8b0b5"/><rect x="977" y="83" width="6" height="2" fill="#e8b0b5"/><rect x="984" y="83" width="3" height="2" fill="#e8b0b5"/><rect x="988" y="83" width="4" height="2" fill="#e8b0b5"/><rect x="993" y="83" width="11" height="2" fill="#e8b0b5"/><rect x="1005" y="83" width="4" height="2" fill="#e8b0b5"/><rect x="943" y="85" width="55" height="2" fill="#e8b0b5"/><rect x="939" y="87" width="9" height="2" fill="#e8b0b5"/><rect x="939" y="89" width="8" height="2" fill="#e8b0b5"/><rect x="948" y="89" width="5" height="2" fill="#e8b0b5"/><rect x="943" y="91" width="2" height="2" fill="#e8b0b5"/><rect x="946" y="91" width="3" height="2" fill="#e8b0b5"/><rect x="950" y="91" width="2" height="2" fill="#e8b0b5"/><rect x="953" y="91" width="7" height="2" fill="#e8b0b5"/><rect x="962" y="91" width="4" height="2" fill="#e8b0b5"/><rect x="967" y="91" width="6" height="2" fill="#e8b0b5"/><rect x="974" y="91" width="6" height="2" fill="#e8b0b5"/><rect x="981" y="91" width="5" height="2" fill="#e8b0b5"/><rect x="943" y="93" width="2" height="2" fill="#e8b0b5"/><rect x="946" y="93" width="3" height="2" fill="#e8b0b5"/><rect x="950" y="93" width="1" height="2" fill="#e8b0b5"/><rect x="952" y="93" width="3" height="2" fill="#e8b0b5"/><rect x="956" y="93" width="2" height="2" fill="#e8b0b5"/><rect x="959" y="93" width="12" height="2" fill="#e8b0b5"/><rect x="973" y="93" width="8" height="2" fill="#e8b0b5"/><rect x="982" y="93" width="11" height="2" fill="#e8b0b5"/><rect x="994" y="93" width="12" height="2" fill="#e8b0b5"/><rect x="939" y="95" width="11" height="2" fill="#e8b0b5"/><rect x="951" y="95" width="5" height="2" fill="#e8b0b5"/><rect x="943" y="97" width="2" height="2" fill="#e8b0b5"/><rect x="946" y="97" width="3" height="2" fill="#e8b0b5"/><rect x="950" y="97" width="2" height="2" fill="#e8b0b5"/><rect x="953" y="97" width="7" height="2" fill="#e8b0b5"/><rect x="962" y="97" width="4" height="2" fill="#e8b0b5"/><rect x="967" y="97" width="15" height="2" fill="#e8b0b5"/><rect x="983" y="97" width="6" height="2" fill="#e8b0b5"/><rect x="990" y="97" width="4" height="2" fill="#e8b0b5"/><rect x="943" y="99" width="2" height="2" fill="#e8b0b5"/><rect x="946" y="99" width="3" height="2" fill="#e8b0b5"/><rect x="950" y="99" width="1" height="2" fill="#e8b0b5"/><rect x="952" y="99" width="3" height="2" fill="#e8b0b5"/><rect x="956" y="99" width="2" height="2" fill="#e8b0b5"/><rect x="959" y="99" width="12" height="2" fill="#e8b0b5"/><rect x="973" y="99" width="8" height="2" fill="#e8b0b5"/><rect x="982" y="99" width="15" height="2" fill="#e8b0b5"/><rect x="998" y="99" width="11" height="2" fill="#e8b0b5"/><rect x="939" y="101" width="9" height="2" fill="#e8b0b5"/><rect x="949" y="101" width="7" height="2" fill="#e8b0b5"/><rect x="957" y="101" width="7" height="2" fill="#e8b0b5"/><rect x="943" y="103" width="2" height="2" fill="#e8b0b5"/><rect x="946" y="103" width="6" height="2" fill="#e8b0b5"/><rect x="953" y="103" width="3" height="2" fill="#e8b0b5"/><rect x="957" y="103" width="9" height="2" fill="#e8b0b5"/><rect x="967" y="103" width="9" height="2" fill="#e8b0b5"/><rect x="977" y="103" width="4" height="2" fill="#e8b0b5"/><rect x="982" y="103" width="11" height="2" fill="#e8b0b5"/><rect x="994" y="103" width="6" height="2" fill="#e8b0b5"/><rect x="1001" y="103" width="8" height="2" fill="#e8b0b5"/><rect x="943" y="105" width="2" height="2" fill="#e8b0b5"/><rect x="946" y="105" width="3" height="2" fill="#e8b0b5"/><rect x="950" y="105" width="1" height="2" fill="#e8b0b5"/><rect x="952" y="105" width="3" height="2" fill="#e8b0b5"/><rect x="956" y="105" width="2" height="2" fill="#e8b0b5"/><rect x="959" y="105" width="12" height="2" fill="#e8b0b5"/><rect x="973" y="105" width="13" height="2" fill="#e8b0b5"/><rect x="987" y="105" width="21" height="2" fill="#e8b0b5"/><rect x="939" y="107" width="3" height="2" fill="#e8b0b5"/><rect x="939" y="109" width="4" height="2" fill="#b0b0c2"/><rect x="944" y="109" width="14" height="2" fill="#b0b0c2"/><rect x="959" y="109" width="6" height="2" fill="#b0b0c2"/><rect x="966" y="109" width="5" height="2" fill="#b0b0c2"/><rect x="939" y="111" width="4" height="2" fill="#b0b0c2"/><rect x="944" y="111" width="11" height="2" fill="#b0b0c2"/><rect x="956" y="111" width="6" height="2" fill="#b0b0c2"/><rect x="963" y="111" width="5" height="2" fill="#b0b0c2"/><rect x="969" y="111" width="7" height="2" fill="#b0b0c2"/><rect x="939" y="115" width="11" height="2" fill="#b0b0c2"/><rect x="951" y="115" width="1" height="2" fill="#b0b0c2"/><rect x="953" y="115" width="1" height="2" fill="#b0b0c2"/><rect x="943" y="117" width="8" height="2" fill="#b0b0c2"/><rect x="952" y="117" width="24" height="2" fill="#b0b0c2"/><rect x="943" y="119" width="14" height="2" fill="#b0b0c2"/><rect x="958" y="119" width="17" height="2" fill="#b0b0c2"/><rect x="939" y="121" width="1" height="2" fill="#b0b0c2"/></svg>
<div class="r" style="left:939px;top:124px;width:70px;height:1px;background:#d8dcf0;"></div>
<div class="r" style="left:1009px;top:79px;width:1px;height:360px;background:#dcdcdc;"></div>
<div class="r" style="left:1009px;top:198px;width:13px;height:171px;background:#ababab;"></div>
<div class="r" style="left:1010px;top:266px;width:12px;height:2px;background:#444444;"></div>
<div class="r" style="left:413px;top:427px;width:504px;height:12px;background:#ababab;"></div>
<div class="r" style="left:348px;top:439px;width:674px;height:1px;background:#e4e4e4;"></div>
<div class="t" style="left:367.20px;top:450.99px;font-size:11px;line-height:14px;color:#424242;font-family:'Liberation Sans', sans-serif;letter-spacing:-0.115px;">TERMINAL</div>
<div class="r" style="left:367px;top:470px;width:56px;height:1px;background:#424242;"></div>
<div class="t" style="left:443.30px;top:450.99px;font-size:11px;line-height:14px;color:#6f6f6f;font-family:'Liberation Sans', sans-serif;letter-spacing:-0.315px;">PROBLEMS</div>
<div class="t" style="left:522.40px;top:450.99px;font-size:11px;line-height:14px;color:#6f6f6f;font-family:'Liberation Sans', sans-serif;letter-spacing:-0.081px;">DEBUG CONSOLE</div>
<div class="r" style="left:675px;top:448px;width:170px;height:19px;box-sizing:border-box;border:1px solid #cecece;border-radius:3px;background:#ffffff;"></div>
<div class="t" style="left:684.00px;top:449.84px;font-size:12px;line-height:16px;color:#222222;font-family:'Liberation Sans', sans-serif;letter-spacing:-0.300px;-webkit-text-stroke:0.2px #222222;">1: Python</div>
<svg class="r" style="left:824px;top:450px;" width="16" height="16" viewBox="0 0 16 16"><path d="M4 6.3 L8.3 10.3 L12.6 6.3" fill="none" stroke="#424242" stroke-width="1.2"/></svg>
<svg class="r" style="left:850px;top:440px;" width="172" height="35" viewBox="850 440 172 35"><g fill="none" stroke="#424242" stroke-width="1.2"><path d="M868.6 450.2 V462.6 M862.4 456.4 H874.8"/><rect x="895.6" y="450.6" width="12" height="11.8" rx="1"/><path d="M901.6 450.6 V462.4"/><path d="M927.6 452.6 H938 M930.5 452.6 V451 H935 V452.6 M928.8 452.6 L929.5 462.4 H936 L936.8 452.6 M931 454.5 V460.5 M932.7 454.5 V460.5 M934.4 454.5 V460.5"/><path d="M960.2 459.4 L965 454.6 L969.8 459.4"/><path d="M993 452.8 L1001.2 461 M1001.2 452.8 L993 461"/></g></svg>
<div class="t" style="left:367.00px;top:488.04px;font-size:13px;line-height:18px;color:#333333;font-family:'Liberation Mono', monospace;letter-spacing:-0.821px;-webkit-text-stroke:0.25px #333333;">Not Found: /livereload</div>
<div class="t" style="left:367.00px;top:503.04px;font-size:13px;line-height:18px;color:#333333;font-family:'Liberation Mono', monospace;letter-spacing:-0.821px;-webkit-text-stroke:0.25px #333333;">[02/Nov/2020 00:08:10] </div>
<div class="t" style="left:527.54px;top:503.04px;font-size:13px;line-height:18px;color:#949800;font-family:'Liberation Mono', monospace;letter-spacing:-0.821px;-webkit-text-stroke:0.25px #949800;">&quot;GET /livereload HTTP/1.1&quot; 404 2116</div>
<div class="t" style="left:367.00px;top:518.04px;font-size:13px;line-height:18px;color:#333333;font-family:'Liberation Mono', monospace;letter-spacing:-0.821px;-webkit-text-stroke:0.25px #333333;">Internal Server Error: /</div>
<div class="t" style="left:367.00px;top:533.04px;font-size:13px;line-height:18px;color:#333333;font-family:'Liberation Mono', monospace;letter-spacing:-0.821px;-webkit-text-stroke:0.25px #333333;">Traceback (most recent call last):</div>
<div class="t" style="left:367.00px;top:548.04px;font-size:13px;line-height:18px;color:#333333;font-family:'Liberation Mono', monospace;letter-spacing:-0.821px;-webkit-text-stroke:0.25px #333333;">  File &quot;/Users/ducoterra/Projects/my_website/venv/lib/python3.9/site-packages/django/core/</div>
<div class="t" style="left:367.00px;top:563.04px;font-size:13px;line-height:18px;color:#333333;font-family:'Liberation Mono', monospace;letter-spacing:-0.821px;-webkit-text-stroke:0.25px #333333;">handlers/exception.py&quot;, line 47, in inner</div>
<div class="t" style="left:367.00px;top:578.04px;font-size:13px;line-height:18px;color:#333333;font-family:'Liberation Mono', monospace;letter-spacing:-0.821px;-webkit-text-stroke:0.25px #333333;">    response = get_response(request)</div>
<div class="t" style="left:367.00px;top:593.04px;font-size:13px;line-height:18px;color:#333333;font-family:'Liberation Mono', monospace;letter-spacing:-0.821px;-webkit-text-stroke:0.25px #333333;">  File &quot;/Users/ducoterra/Projects/my_website/venv/lib/python3.9/site-packages/django/core/</div>
<div class="t" style="left:367.00px;top:608.04px;font-size:13px;line-height:18px;color:#333333;font-family:'Liberation Mono', monospace;letter-spacing:-0.821px;-webkit-text-stroke:0.25px #333333;">handlers/base.py&quot;, line 179, in _get_response</div>
<div class="t" style="left:367.00px;top:623.04px;font-size:13px;line-height:18px;color:#333333;font-family:'Liberation Mono', monospace;letter-spacing:-0.821px;-webkit-text-stroke:0.25px #333333;">    response = wrapped_callback(request, *callback_args, **callback_kwargs)</div>
<div class="t" style="left:367.00px;top:638.04px;font-size:13px;line-height:18px;color:#333333;font-family:'Liberation Mono', monospace;letter-spacing:-0.821px;-webkit-text-stroke:0.25px #333333;">  File &quot;/Users/ducoterra/Projects/my_website/mysite/views.py&quot;, line 6, in index</div>
<div class="t" style="left:367.00px;top:653.04px;font-size:13px;line-height:18px;color:#333333;font-family:'Liberation Mono', monospace;letter-spacing:-0.821px;-webkit-text-stroke:0.25px #333333;">    return render(&quot;&lt;h1&gt;hello!&lt;/h1&gt;&quot;)</div>
<div class="t" style="left:367.00px;top:668.04px;font-size:13px;line-height:18px;color:#333333;font-family:'Liberation Mono', monospace;letter-spacing:-0.821px;-webkit-text-stroke:0.25px #333333;">TypeError: render() missing 1 required positional argument: &#x27;template_name&#x27;</div>
<div class="t" style="left:367.00px;top:683.04px;font-size:13px;line-height:18px;color:#333333;font-family:'Liberation Mono', monospace;letter-spacing:-0.821px;-webkit-text-stroke:0.25px #333333;">[02/Nov/2020 00:08:48] </div>
<div class="t" style="left:527.54px;top:683.04px;font-size:13px;line-height:18px;color:#bc05bc;font-family:'Liberation Mono', monospace;letter-spacing:-0.821px;font-weight:bold;">&quot;GET / HTTP/1.1&quot; 500 57569</div>
<div class="t" style="left:367.00px;top:698.04px;font-size:13px;line-height:18px;color:#333333;font-family:'Liberation Mono', monospace;letter-spacing:-0.821px;-webkit-text-stroke:0.25px #333333;">Not Found: /favicon.ico</div>
<div class="t" style="left:367.00px;top:713.04px;font-size:13px;line-height:18px;color:#333333;font-family:'Liberation Mono', monospace;letter-spacing:-0.821px;-webkit-text-stroke:0.25px #333333;">[02/Nov/2020 00:08:48] </div>
<div class="t" style="left:527.54px;top:713.04px;font-size:13px;line-height:18px;color:#949800;font-family:'Liberation Mono', monospace;letter-spacing:-0.821px;-webkit-text-stroke:0.25px #949800;">&quot;GET /favicon.ico HTTP/1.1&quot; 404 2119</div>
<div class="r" style="left:367px;top:729px;width:7px;height:14px;box-sizing:border-box;border:1px solid #333333;"></div>
<svg class="r" style="left:0px;top:746px;" width="33" height="22" viewBox="0 746 33 22"><path d="M12 755.2 L15.5 758.5 L12.2 761.9 M19.7 751.3 L16.3 754.7 L19.7 758.6" fill="none" stroke="#ffffff" stroke-width="1.2"/></svg>
<div class="t" style="left:41.50px;top:749.14px;font-size:12px;line-height:16px;color:#ffffff;font-family:'Liberation Sans', sans-serif;letter-spacing:0.385px;">Python 3.9.0 64-bit (&#x27;venv&#x27;: venv)</div>
<svg class="r" style="left:240px;top:746px;" width="70" height="22" viewBox="240 746 70 22"><g fill="none" stroke="#ffffff" stroke-width="1.1"><circle cx="252.5" cy="757" r="5.6"/><path d="M250.3 754.8 L254.7 759.2 M254.7 754.8 L250.3 759.2"/><path d="M281.4 751.3 L287.4 762 H275.4 Z" stroke-linejoin="round"/><path d="M281.4 755.3 V758.6 M281.4 759.8 V760.8"/></g></svg>
<div class="t" style="left:264.00px;top:749.14px;font-size:12px;line-height:16px;color:#ffffff;font-family:'Liberation Sans', sans-serif;">0</div>
<div class="t" style="left:291.60px;top:749.14px;font-size:12px;line-height:16px;color:#ffffff;font-family:'Liberation Sans', sans-serif;">0</div>
<div class="t" style="left:671.80px;top:749.14px;font-size:12px;line-height:16px;color:#ffffff;font-family:'Liberation Sans', sans-serif;letter-spacing:0.133px;">Ln 23, Col 1</div>
<div class="t" style="left:753.30px;top:749.14px;font-size:12px;line-height:16px;color:#ffffff;font-family:'Liberation Sans', sans-serif;letter-spacing:0.295px;">Spaces: 4</div>
<div class="t" style="left:825.80px;top:749.14px;font-size:12px;line-height:16px;color:#ffffff;font-family:'Liberation Sans', sans-serif;letter-spacing:0.470px;">UTF-8</div>
<div class="t" style="left:878.50px;top:749.14px;font-size:12px;line-height:16px;color:#ffffff;font-family:'Liberation Sans', sans-serif;letter-spacing:-0.880px;">LF</div>
<div class="t" style="left:908.00px;top:749.14px;font-size:12px;line-height:16px;color:#ffffff;font-family:'Liberation Sans', sans-serif;letter-spacing:0.464px;">Python</div>
<svg class="r" style="left:960px;top:746px;" width="62" height="22" viewBox="960 746 62 22"><g fill="none" stroke="#ffffff" stroke-width="1.1" stroke-linejoin="round"><circle cx="969.5" cy="754.2" r="2.3"/><path d="M965.5 762.5 Q965.8 758.5 969.5 758.5 Q971.5 758.5 972.5 760"/><path d="M973 751.5 H978.5 V756.5 H976.5 L975 758 V756.5 H973 Z"/><path d="M997.6 761 H1007.2 Q1005.7 759.6 1005.7 757.2 V755.6 Q1005.7 752 1002.4 752 Q999.1 752 999.1 755.6 V757.2 Q999.1 759.6 997.6 761 Z"/><path d="M1001.3 762.6 H1003.5"/></g><circle cx="1006" cy="752.3" r="2.4" fill="#ffffff"/></svg>
</body></html>
